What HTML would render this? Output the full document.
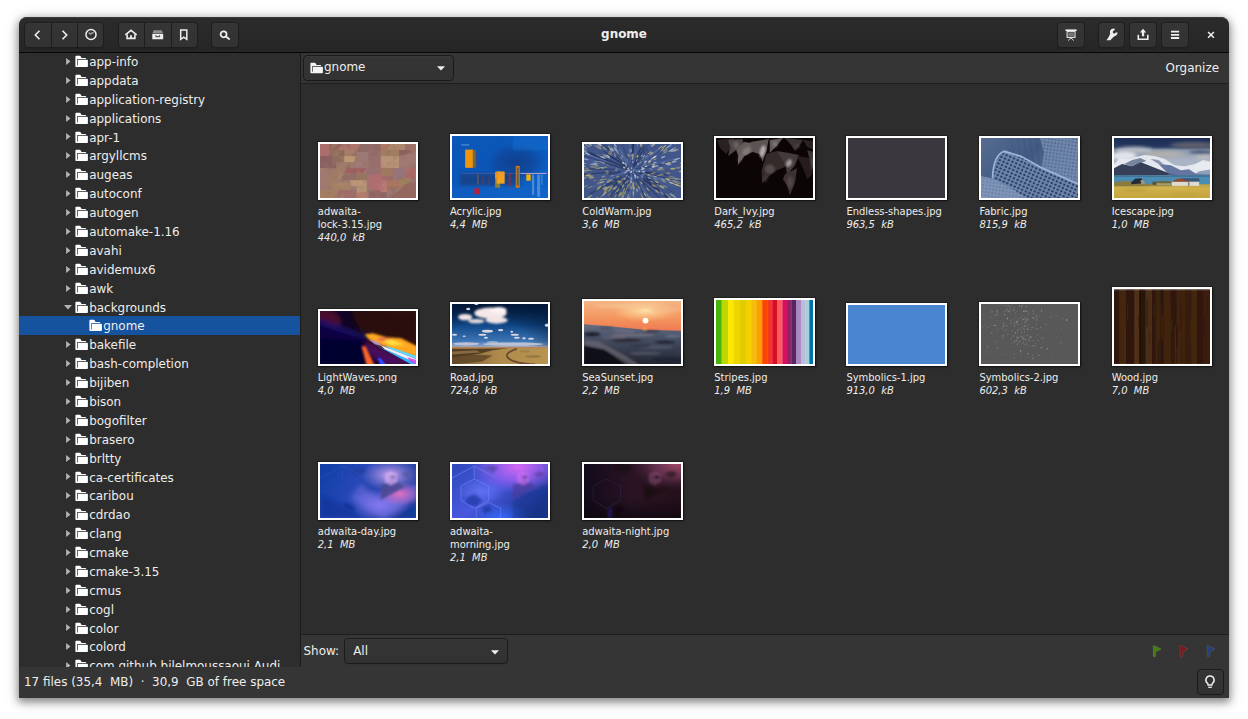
<!DOCTYPE html>
<html><head><meta charset="utf-8"><title>gnome</title>
<style>
html,body{margin:0;padding:0;background:#fff;}
body{width:1248px;height:719px;overflow:hidden;position:relative;font-family:"DejaVu Sans","Liberation Sans",sans-serif;color:#eeeeec;font-size:11.94px;}
#win{position:absolute;left:19px;top:17px;width:1210px;height:681px;background:#353535;border-radius:8px 8px 0 0;box-shadow:0 3px 9px 1px rgba(0,0,0,0.44),0 2px 16px 2px rgba(0,0,0,0.10);overflow:hidden;}
#hdr{position:absolute;left:0;top:0;width:1210px;height:35px;background:linear-gradient(to top,#262626,#2b2b2b);border-bottom:1px solid #070707;box-shadow:inset 0 1px rgba(238,238,236,0.07);border-radius:8px 8px 0 0;}
#title{position:absolute;left:0;width:1210px;top:9px;text-align:center;font-weight:bold;font-size:11.94px;line-height:17px;}
.grp{position:absolute;top:5px;height:24px;border:1px solid #1e1e1e;border-radius:4px;background:linear-gradient(to top,#323232 2px,#353535);box-shadow:inset 0 1px rgba(255,255,255,0.02),0 1px 1px rgba(0,0,0,0.15);}
.grp i{position:absolute;top:0;width:1px;height:24px;background:#1e1e1e;}
.hi{position:absolute;}
.bg{position:absolute;top:6px;height:24px;display:flex;border-radius:4px;}
.btn{width:24px;height:22px;border:1px solid #1b1b1b;border-left-width:0;background:linear-gradient(to top,#323232 2px,#353535);box-shadow:inset 0 1px rgba(255,255,255,0.02);position:relative;}
.btn:first-child{border-left-width:1px;border-radius:4px 0 0 4px;}
.btn:last-child{border-radius:0 4px 4px 0;}
.btn:only-child{border-radius:4px;}
.bg .btn{width:25px}.bg .btn:first-child{width:24px}
.btn svg{position:absolute;left:50%;top:50%;transform:translate(-50%,-50%);}
#side{position:absolute;left:0;top:36px;width:281px;height:614px;background:#2d2d2d;overflow:hidden;}
#vsep{position:absolute;left:281px;top:36px;width:1px;height:614px;background:#1b1b1b;}
.row{position:absolute;left:0;width:281px;height:18.9px;}
.row.sel{background:#15539e;}
.row .ar{position:absolute;}
.row .ic{position:absolute;top:3px;}
.row .fi{display:block;}
.row .tx{position:absolute;top:2px;line-height:17px;white-space:pre;}
#loc{position:absolute;left:282px;top:36px;width:928px;height:30px;background:#353535;border-bottom:1px solid #1e1e1e;}
.combo{position:absolute;border:1px solid #1b1b1b;border-radius:4px;background:linear-gradient(to top,#323232 2px,#353535);box-shadow:inset 0 1px rgba(255,255,255,0.02),0 1px 2px rgba(0,0,0,0.07);}
#grid{position:absolute;left:282px;top:67px;width:928px;height:550px;background:#2d2d2d;}
#filt{position:absolute;left:282px;top:617px;width:928px;height:32px;background:#353535;border-top:1px solid #1e1e1e;}
#stat{position:absolute;left:0;top:650px;width:1210px;height:31px;background:#353535;}
.th{position:absolute;box-sizing:border-box;border:2px solid #fff;box-shadow:0 0 0 1px rgba(0,0,0,0.25),1px 1px 2px rgba(0,0,0,0.5);background:#fff;}
.th{overflow:hidden;}
.th svg{display:block;width:calc(100% + 0.9px);height:calc(100% + 0.9px);}
.cap{position:absolute;font-size:9.95px;line-height:13px;white-space:pre;}
.cap i{font-style:oblique;}
</style></head><body>
<div id="win">
<div id="hdr">
<div id="title">gnome</div>
<div class="grp" style="left:5px;width:78px"><i style="left:26px"></i><i style="left:52.3px"></i></div><div class="grp" style="left:99px;width:78px"><i style="left:25.4px"></i><i style="left:52.3px"></i></div><div class="grp" style="left:192px;width:26px"></div>
<div class="grp" style="left:1038px;width:25.5px"></div><div class="grp" style="left:1078.5px;width:25.5px"></div><div class="grp" style="left:1110px;width:26px"></div><div class="grp" style="left:1142px;width:25.5px"></div>
<svg class="hi" style="left:11px;top:10px" width="16" height="16" viewBox="0 0 16 16"><path d="M9.5 3.8L5.3 8l4.2 4.2" stroke="#eeeeec" fill="none" stroke-width="1.6"/></svg>
<svg class="hi" style="left:37.2px;top:10px" width="16" height="16" viewBox="0 0 16 16"><path d="M6.5 3.8L10.7 8l-4.2 4.2" stroke="#eeeeec" fill="none" stroke-width="1.6"/></svg>
<svg class="hi" style="left:64px;top:10px" width="16" height="16" viewBox="0 0 16 16"><circle cx="8" cy="7.5" r="5.05" stroke="#eeeeec" fill="none" stroke-width="1.5"/><path d="M5.8 5.6L7.6 7.1l3-2" stroke="#a0a09f" fill="none" stroke-width="1.4"/></svg>
<svg class="hi" style="left:103.9px;top:10px" width="16" height="16" viewBox="0 0 16 16"><path d="M2.3 7.9L8 3.3L13.7 7.9" stroke="#eeeeec" fill="none" stroke-width="1.5"/><path d="M4.1 7.2V11.4H11.9V7.2" stroke="#eeeeec" fill="none" stroke-width="1.6"/><rect x="7.1" y="8.2" width="1.8" height="3.4" fill="#eeeeec"/></svg>
<svg class="hi" style="left:131px;top:10px" width="16" height="16" viewBox="0 0 16 16"><path d="M3.6 3.2H11.8L13 6.4H2.4Z" fill="#8f8f8e"/><path d="M2.3 7H13.2V12.2H2.3Z" fill="#eeeeec"/><path d="M5.9 8.2V9.7H9.6V8.2" stroke="#333" fill="none" stroke-width="1"/></svg>
<svg class="hi" style="left:156.8px;top:10px" width="16" height="16" viewBox="0 0 16 16"><path d="M4.7 2.9H10.8V12.3L7.75 10.2L4.7 12.3Z" stroke="#eeeeec" fill="none" stroke-width="1.5"/></svg>
<svg class="hi" style="left:198px;top:10px" width="16" height="16" viewBox="0 0 16 16"><circle cx="6.6" cy="7.3" r="3" stroke="#eeeeec" fill="none" stroke-width="1.7"/><path d="M8.9 9.6L12.7 12.4" stroke="#eeeeec" fill="none" stroke-width="1.9"/></svg>
<svg class="hi" style="left:1043.5px;top:10px" width="16" height="16" viewBox="0 0 16 16"><rect x="2.5" y="2.4" width="11.1" height="1.6" fill="#eeeeec"/><rect x="4.1" y="4.4" width="7.9" height="6" fill="#777" stroke="#eeeeec" stroke-width="1"/><rect x="5.1" y="5.2" width="5.9" height="4.4" fill="none" stroke="#3a3a3a" stroke-width="0.5"/><path d="M5.2 13.5L8 10.9L10.8 13.5" stroke="#eeeeec" fill="none" stroke-width="0.9"/></svg>
<svg class="hi" style="left:1084.5px;top:10px" width="16" height="16" viewBox="0 0 16 16"><path d="M10.61 1.49A3.9 3.9 0 1 0 13.66 5.84L11.77 5.31A1.5 1.5 0 1 1 10.51 3.51Z" fill="#eeeeec"/><path d="M6.3 6.4Q5 10 2.4 13.2H6.3L11 8.6Z" fill="#eeeeec"/></svg>
<svg class="hi" style="left:1116px;top:10px" width="16" height="16" viewBox="0 0 16 16"><path d="M3.3 7.8V12.2H12.8V7.8" stroke="#eeeeec" fill="none" stroke-width="1.6"/><rect x="6.9" y="4.6" width="2.3" height="4.7" fill="#eeeeec"/><path d="M4.9 5.5L8.05 1.8L11.2 5.5Z" fill="#eeeeec"/></svg>
<svg class="hi" style="left:1147.75px;top:10px" width="16" height="16" viewBox="0 0 16 16"><path d="M3.95 4.7H12.15M3.95 7.85H12.15M3.95 11H12.15" stroke="#eeeeec" fill="none" stroke-width="1.8"/></svg>
<svg class="hi" style="left:1184px;top:10px" width="16" height="16" viewBox="0 0 16 16"><path d="M5.1 5L10.9 10.8M10.9 5L5.1 10.8" stroke="#eeeeec" fill="none" stroke-width="1.55"/></svg>
</div>
<div id="side">
<div class="row" style="top:-0.95px"><svg class="ar" style="left:47px;top:5.9px" width="5" height="7" viewBox="0 0 5 7"><path d="M0.1 0V7L4.5 3.5Z" fill="#b4b4b3"/></svg><span class="ic" style="left:56px"><svg class="fi" viewBox="0 0 13 12" width="13" height="12"><path fill-rule="evenodd" d="M0.4 1.6Q0.4 0.8 1.2 0.8H4.9Q5.3 0.8 5.6 1.3L6.6 3.1H10.5Q11.1 3.1 11.1 3.7V4.7H12.2Q12.9 4.7 12.9 5.4V11.3Q12.9 12 12.2 12H1.2Q0.4 12 0.4 11.2ZM2.2 4.1H11.1V4.8H2.9V10.4H2.2Z" fill="#fff"/></svg></span><span class="tx" style="left:70.2px">app-info</span></div>
<div class="row" style="top:17.94px"><svg class="ar" style="left:47px;top:5.9px" width="5" height="7" viewBox="0 0 5 7"><path d="M0.1 0V7L4.5 3.5Z" fill="#b4b4b3"/></svg><span class="ic" style="left:56px"><svg class="fi" viewBox="0 0 13 12" width="13" height="12"><path fill-rule="evenodd" d="M0.4 1.6Q0.4 0.8 1.2 0.8H4.9Q5.3 0.8 5.6 1.3L6.6 3.1H10.5Q11.1 3.1 11.1 3.7V4.7H12.2Q12.9 4.7 12.9 5.4V11.3Q12.9 12 12.2 12H1.2Q0.4 12 0.4 11.2ZM2.2 4.1H11.1V4.8H2.9V10.4H2.2Z" fill="#fff"/></svg></span><span class="tx" style="left:70.2px">appdata</span></div>
<div class="row" style="top:36.82px"><svg class="ar" style="left:47px;top:5.9px" width="5" height="7" viewBox="0 0 5 7"><path d="M0.1 0V7L4.5 3.5Z" fill="#b4b4b3"/></svg><span class="ic" style="left:56px"><svg class="fi" viewBox="0 0 13 12" width="13" height="12"><path fill-rule="evenodd" d="M0.4 1.6Q0.4 0.8 1.2 0.8H4.9Q5.3 0.8 5.6 1.3L6.6 3.1H10.5Q11.1 3.1 11.1 3.7V4.7H12.2Q12.9 4.7 12.9 5.4V11.3Q12.9 12 12.2 12H1.2Q0.4 12 0.4 11.2ZM2.2 4.1H11.1V4.8H2.9V10.4H2.2Z" fill="#fff"/></svg></span><span class="tx" style="left:70.2px">application-registry</span></div>
<div class="row" style="top:55.7px"><svg class="ar" style="left:47px;top:5.9px" width="5" height="7" viewBox="0 0 5 7"><path d="M0.1 0V7L4.5 3.5Z" fill="#b4b4b3"/></svg><span class="ic" style="left:56px"><svg class="fi" viewBox="0 0 13 12" width="13" height="12"><path fill-rule="evenodd" d="M0.4 1.6Q0.4 0.8 1.2 0.8H4.9Q5.3 0.8 5.6 1.3L6.6 3.1H10.5Q11.1 3.1 11.1 3.7V4.7H12.2Q12.9 4.7 12.9 5.4V11.3Q12.9 12 12.2 12H1.2Q0.4 12 0.4 11.2ZM2.2 4.1H11.1V4.8H2.9V10.4H2.2Z" fill="#fff"/></svg></span><span class="tx" style="left:70.2px">applications</span></div>
<div class="row" style="top:74.59px"><svg class="ar" style="left:47px;top:5.9px" width="5" height="7" viewBox="0 0 5 7"><path d="M0.1 0V7L4.5 3.5Z" fill="#b4b4b3"/></svg><span class="ic" style="left:56px"><svg class="fi" viewBox="0 0 13 12" width="13" height="12"><path fill-rule="evenodd" d="M0.4 1.6Q0.4 0.8 1.2 0.8H4.9Q5.3 0.8 5.6 1.3L6.6 3.1H10.5Q11.1 3.1 11.1 3.7V4.7H12.2Q12.9 4.7 12.9 5.4V11.3Q12.9 12 12.2 12H1.2Q0.4 12 0.4 11.2ZM2.2 4.1H11.1V4.8H2.9V10.4H2.2Z" fill="#fff"/></svg></span><span class="tx" style="left:70.2px">apr-1</span></div>
<div class="row" style="top:93.48px"><svg class="ar" style="left:47px;top:5.9px" width="5" height="7" viewBox="0 0 5 7"><path d="M0.1 0V7L4.5 3.5Z" fill="#b4b4b3"/></svg><span class="ic" style="left:56px"><svg class="fi" viewBox="0 0 13 12" width="13" height="12"><path fill-rule="evenodd" d="M0.4 1.6Q0.4 0.8 1.2 0.8H4.9Q5.3 0.8 5.6 1.3L6.6 3.1H10.5Q11.1 3.1 11.1 3.7V4.7H12.2Q12.9 4.7 12.9 5.4V11.3Q12.9 12 12.2 12H1.2Q0.4 12 0.4 11.2ZM2.2 4.1H11.1V4.8H2.9V10.4H2.2Z" fill="#fff"/></svg></span><span class="tx" style="left:70.2px">argyllcms</span></div>
<div class="row" style="top:112.36px"><svg class="ar" style="left:47px;top:5.9px" width="5" height="7" viewBox="0 0 5 7"><path d="M0.1 0V7L4.5 3.5Z" fill="#b4b4b3"/></svg><span class="ic" style="left:56px"><svg class="fi" viewBox="0 0 13 12" width="13" height="12"><path fill-rule="evenodd" d="M0.4 1.6Q0.4 0.8 1.2 0.8H4.9Q5.3 0.8 5.6 1.3L6.6 3.1H10.5Q11.1 3.1 11.1 3.7V4.7H12.2Q12.9 4.7 12.9 5.4V11.3Q12.9 12 12.2 12H1.2Q0.4 12 0.4 11.2ZM2.2 4.1H11.1V4.8H2.9V10.4H2.2Z" fill="#fff"/></svg></span><span class="tx" style="left:70.2px">augeas</span></div>
<div class="row" style="top:131.25px"><svg class="ar" style="left:47px;top:5.9px" width="5" height="7" viewBox="0 0 5 7"><path d="M0.1 0V7L4.5 3.5Z" fill="#b4b4b3"/></svg><span class="ic" style="left:56px"><svg class="fi" viewBox="0 0 13 12" width="13" height="12"><path fill-rule="evenodd" d="M0.4 1.6Q0.4 0.8 1.2 0.8H4.9Q5.3 0.8 5.6 1.3L6.6 3.1H10.5Q11.1 3.1 11.1 3.7V4.7H12.2Q12.9 4.7 12.9 5.4V11.3Q12.9 12 12.2 12H1.2Q0.4 12 0.4 11.2ZM2.2 4.1H11.1V4.8H2.9V10.4H2.2Z" fill="#fff"/></svg></span><span class="tx" style="left:70.2px">autoconf</span></div>
<div class="row" style="top:150.13px"><svg class="ar" style="left:47px;top:5.9px" width="5" height="7" viewBox="0 0 5 7"><path d="M0.1 0V7L4.5 3.5Z" fill="#b4b4b3"/></svg><span class="ic" style="left:56px"><svg class="fi" viewBox="0 0 13 12" width="13" height="12"><path fill-rule="evenodd" d="M0.4 1.6Q0.4 0.8 1.2 0.8H4.9Q5.3 0.8 5.6 1.3L6.6 3.1H10.5Q11.1 3.1 11.1 3.7V4.7H12.2Q12.9 4.7 12.9 5.4V11.3Q12.9 12 12.2 12H1.2Q0.4 12 0.4 11.2ZM2.2 4.1H11.1V4.8H2.9V10.4H2.2Z" fill="#fff"/></svg></span><span class="tx" style="left:70.2px">autogen</span></div>
<div class="row" style="top:169.01px"><svg class="ar" style="left:47px;top:5.9px" width="5" height="7" viewBox="0 0 5 7"><path d="M0.1 0V7L4.5 3.5Z" fill="#b4b4b3"/></svg><span class="ic" style="left:56px"><svg class="fi" viewBox="0 0 13 12" width="13" height="12"><path fill-rule="evenodd" d="M0.4 1.6Q0.4 0.8 1.2 0.8H4.9Q5.3 0.8 5.6 1.3L6.6 3.1H10.5Q11.1 3.1 11.1 3.7V4.7H12.2Q12.9 4.7 12.9 5.4V11.3Q12.9 12 12.2 12H1.2Q0.4 12 0.4 11.2ZM2.2 4.1H11.1V4.8H2.9V10.4H2.2Z" fill="#fff"/></svg></span><span class="tx" style="left:70.2px">automake-1.16</span></div>
<div class="row" style="top:187.9px"><svg class="ar" style="left:47px;top:5.9px" width="5" height="7" viewBox="0 0 5 7"><path d="M0.1 0V7L4.5 3.5Z" fill="#b4b4b3"/></svg><span class="ic" style="left:56px"><svg class="fi" viewBox="0 0 13 12" width="13" height="12"><path fill-rule="evenodd" d="M0.4 1.6Q0.4 0.8 1.2 0.8H4.9Q5.3 0.8 5.6 1.3L6.6 3.1H10.5Q11.1 3.1 11.1 3.7V4.7H12.2Q12.9 4.7 12.9 5.4V11.3Q12.9 12 12.2 12H1.2Q0.4 12 0.4 11.2ZM2.2 4.1H11.1V4.8H2.9V10.4H2.2Z" fill="#fff"/></svg></span><span class="tx" style="left:70.2px">avahi</span></div>
<div class="row" style="top:206.79px"><svg class="ar" style="left:47px;top:5.9px" width="5" height="7" viewBox="0 0 5 7"><path d="M0.1 0V7L4.5 3.5Z" fill="#b4b4b3"/></svg><span class="ic" style="left:56px"><svg class="fi" viewBox="0 0 13 12" width="13" height="12"><path fill-rule="evenodd" d="M0.4 1.6Q0.4 0.8 1.2 0.8H4.9Q5.3 0.8 5.6 1.3L6.6 3.1H10.5Q11.1 3.1 11.1 3.7V4.7H12.2Q12.9 4.7 12.9 5.4V11.3Q12.9 12 12.2 12H1.2Q0.4 12 0.4 11.2ZM2.2 4.1H11.1V4.8H2.9V10.4H2.2Z" fill="#fff"/></svg></span><span class="tx" style="left:70.2px">avidemux6</span></div>
<div class="row" style="top:225.67px"><svg class="ar" style="left:47px;top:5.9px" width="5" height="7" viewBox="0 0 5 7"><path d="M0.1 0V7L4.5 3.5Z" fill="#b4b4b3"/></svg><span class="ic" style="left:56px"><svg class="fi" viewBox="0 0 13 12" width="13" height="12"><path fill-rule="evenodd" d="M0.4 1.6Q0.4 0.8 1.2 0.8H4.9Q5.3 0.8 5.6 1.3L6.6 3.1H10.5Q11.1 3.1 11.1 3.7V4.7H12.2Q12.9 4.7 12.9 5.4V11.3Q12.9 12 12.2 12H1.2Q0.4 12 0.4 11.2ZM2.2 4.1H11.1V4.8H2.9V10.4H2.2Z" fill="#fff"/></svg></span><span class="tx" style="left:70.2px">awk</span></div>
<div class="row" style="top:244.56px"><svg class="ar" style="left:45px;top:7.8px" width="8" height="5" viewBox="0 0 8 5"><path d="M0 0H8L4 4.4Z" fill="#b4b4b3"/></svg><span class="ic" style="left:56px"><svg class="fi" viewBox="0 0 13 12" width="13" height="12"><path fill-rule="evenodd" d="M0.4 1.6Q0.4 0.8 1.2 0.8H4.9Q5.3 0.8 5.6 1.3L6.6 3.1H10.5Q11.1 3.1 11.1 3.7V4.7H12.2Q12.9 4.7 12.9 5.4V11.3Q12.9 12 12.2 12H1.2Q0.4 12 0.4 11.2ZM2.2 4.1H11.1V4.8H2.9V10.4H2.2Z" fill="#fff"/></svg></span><span class="tx" style="left:70.2px">backgrounds</span></div>
<div class="row sel" style="top:263.44px"><span class="ic" style="left:70px"><svg class="fi" viewBox="0 0 13 12" width="13" height="12"><path fill-rule="evenodd" d="M0.4 1.6Q0.4 0.8 1.2 0.8H4.9Q5.3 0.8 5.6 1.3L6.6 3.1H10.5Q11.1 3.1 11.1 3.7V4.7H12.2Q12.9 4.7 12.9 5.4V11.3Q12.9 12 12.2 12H1.2Q0.4 12 0.4 11.2ZM2.2 4.1H11.1V4.8H2.9V10.4H2.2Z" fill="#fff"/></svg></span><span class="tx" style="left:84.2px">gnome</span></div>
<div class="row" style="top:282.33px"><svg class="ar" style="left:47px;top:5.9px" width="5" height="7" viewBox="0 0 5 7"><path d="M0.1 0V7L4.5 3.5Z" fill="#b4b4b3"/></svg><span class="ic" style="left:56px"><svg class="fi" viewBox="0 0 13 12" width="13" height="12"><path fill-rule="evenodd" d="M0.4 1.6Q0.4 0.8 1.2 0.8H4.9Q5.3 0.8 5.6 1.3L6.6 3.1H10.5Q11.1 3.1 11.1 3.7V4.7H12.2Q12.9 4.7 12.9 5.4V11.3Q12.9 12 12.2 12H1.2Q0.4 12 0.4 11.2ZM2.2 4.1H11.1V4.8H2.9V10.4H2.2Z" fill="#fff"/></svg></span><span class="tx" style="left:70.2px">bakefile</span></div>
<div class="row" style="top:301.21px"><svg class="ar" style="left:47px;top:5.9px" width="5" height="7" viewBox="0 0 5 7"><path d="M0.1 0V7L4.5 3.5Z" fill="#b4b4b3"/></svg><span class="ic" style="left:56px"><svg class="fi" viewBox="0 0 13 12" width="13" height="12"><path fill-rule="evenodd" d="M0.4 1.6Q0.4 0.8 1.2 0.8H4.9Q5.3 0.8 5.6 1.3L6.6 3.1H10.5Q11.1 3.1 11.1 3.7V4.7H12.2Q12.9 4.7 12.9 5.4V11.3Q12.9 12 12.2 12H1.2Q0.4 12 0.4 11.2ZM2.2 4.1H11.1V4.8H2.9V10.4H2.2Z" fill="#fff"/></svg></span><span class="tx" style="left:70.2px">bash-completion</span></div>
<div class="row" style="top:320.1px"><svg class="ar" style="left:47px;top:5.9px" width="5" height="7" viewBox="0 0 5 7"><path d="M0.1 0V7L4.5 3.5Z" fill="#b4b4b3"/></svg><span class="ic" style="left:56px"><svg class="fi" viewBox="0 0 13 12" width="13" height="12"><path fill-rule="evenodd" d="M0.4 1.6Q0.4 0.8 1.2 0.8H4.9Q5.3 0.8 5.6 1.3L6.6 3.1H10.5Q11.1 3.1 11.1 3.7V4.7H12.2Q12.9 4.7 12.9 5.4V11.3Q12.9 12 12.2 12H1.2Q0.4 12 0.4 11.2ZM2.2 4.1H11.1V4.8H2.9V10.4H2.2Z" fill="#fff"/></svg></span><span class="tx" style="left:70.2px">bijiben</span></div>
<div class="row" style="top:338.98px"><svg class="ar" style="left:47px;top:5.9px" width="5" height="7" viewBox="0 0 5 7"><path d="M0.1 0V7L4.5 3.5Z" fill="#b4b4b3"/></svg><span class="ic" style="left:56px"><svg class="fi" viewBox="0 0 13 12" width="13" height="12"><path fill-rule="evenodd" d="M0.4 1.6Q0.4 0.8 1.2 0.8H4.9Q5.3 0.8 5.6 1.3L6.6 3.1H10.5Q11.1 3.1 11.1 3.7V4.7H12.2Q12.9 4.7 12.9 5.4V11.3Q12.9 12 12.2 12H1.2Q0.4 12 0.4 11.2ZM2.2 4.1H11.1V4.8H2.9V10.4H2.2Z" fill="#fff"/></svg></span><span class="tx" style="left:70.2px">bison</span></div>
<div class="row" style="top:357.87px"><svg class="ar" style="left:47px;top:5.9px" width="5" height="7" viewBox="0 0 5 7"><path d="M0.1 0V7L4.5 3.5Z" fill="#b4b4b3"/></svg><span class="ic" style="left:56px"><svg class="fi" viewBox="0 0 13 12" width="13" height="12"><path fill-rule="evenodd" d="M0.4 1.6Q0.4 0.8 1.2 0.8H4.9Q5.3 0.8 5.6 1.3L6.6 3.1H10.5Q11.1 3.1 11.1 3.7V4.7H12.2Q12.9 4.7 12.9 5.4V11.3Q12.9 12 12.2 12H1.2Q0.4 12 0.4 11.2ZM2.2 4.1H11.1V4.8H2.9V10.4H2.2Z" fill="#fff"/></svg></span><span class="tx" style="left:70.2px">bogofilter</span></div>
<div class="row" style="top:376.75px"><svg class="ar" style="left:47px;top:5.9px" width="5" height="7" viewBox="0 0 5 7"><path d="M0.1 0V7L4.5 3.5Z" fill="#b4b4b3"/></svg><span class="ic" style="left:56px"><svg class="fi" viewBox="0 0 13 12" width="13" height="12"><path fill-rule="evenodd" d="M0.4 1.6Q0.4 0.8 1.2 0.8H4.9Q5.3 0.8 5.6 1.3L6.6 3.1H10.5Q11.1 3.1 11.1 3.7V4.7H12.2Q12.9 4.7 12.9 5.4V11.3Q12.9 12 12.2 12H1.2Q0.4 12 0.4 11.2ZM2.2 4.1H11.1V4.8H2.9V10.4H2.2Z" fill="#fff"/></svg></span><span class="tx" style="left:70.2px">brasero</span></div>
<div class="row" style="top:395.64px"><svg class="ar" style="left:47px;top:5.9px" width="5" height="7" viewBox="0 0 5 7"><path d="M0.1 0V7L4.5 3.5Z" fill="#b4b4b3"/></svg><span class="ic" style="left:56px"><svg class="fi" viewBox="0 0 13 12" width="13" height="12"><path fill-rule="evenodd" d="M0.4 1.6Q0.4 0.8 1.2 0.8H4.9Q5.3 0.8 5.6 1.3L6.6 3.1H10.5Q11.1 3.1 11.1 3.7V4.7H12.2Q12.9 4.7 12.9 5.4V11.3Q12.9 12 12.2 12H1.2Q0.4 12 0.4 11.2ZM2.2 4.1H11.1V4.8H2.9V10.4H2.2Z" fill="#fff"/></svg></span><span class="tx" style="left:70.2px">brltty</span></div>
<div class="row" style="top:414.52px"><svg class="ar" style="left:47px;top:5.9px" width="5" height="7" viewBox="0 0 5 7"><path d="M0.1 0V7L4.5 3.5Z" fill="#b4b4b3"/></svg><span class="ic" style="left:56px"><svg class="fi" viewBox="0 0 13 12" width="13" height="12"><path fill-rule="evenodd" d="M0.4 1.6Q0.4 0.8 1.2 0.8H4.9Q5.3 0.8 5.6 1.3L6.6 3.1H10.5Q11.1 3.1 11.1 3.7V4.7H12.2Q12.9 4.7 12.9 5.4V11.3Q12.9 12 12.2 12H1.2Q0.4 12 0.4 11.2ZM2.2 4.1H11.1V4.8H2.9V10.4H2.2Z" fill="#fff"/></svg></span><span class="tx" style="left:70.2px">ca-certificates</span></div>
<div class="row" style="top:433.41px"><svg class="ar" style="left:47px;top:5.9px" width="5" height="7" viewBox="0 0 5 7"><path d="M0.1 0V7L4.5 3.5Z" fill="#b4b4b3"/></svg><span class="ic" style="left:56px"><svg class="fi" viewBox="0 0 13 12" width="13" height="12"><path fill-rule="evenodd" d="M0.4 1.6Q0.4 0.8 1.2 0.8H4.9Q5.3 0.8 5.6 1.3L6.6 3.1H10.5Q11.1 3.1 11.1 3.7V4.7H12.2Q12.9 4.7 12.9 5.4V11.3Q12.9 12 12.2 12H1.2Q0.4 12 0.4 11.2ZM2.2 4.1H11.1V4.8H2.9V10.4H2.2Z" fill="#fff"/></svg></span><span class="tx" style="left:70.2px">caribou</span></div>
<div class="row" style="top:452.29px"><svg class="ar" style="left:47px;top:5.9px" width="5" height="7" viewBox="0 0 5 7"><path d="M0.1 0V7L4.5 3.5Z" fill="#b4b4b3"/></svg><span class="ic" style="left:56px"><svg class="fi" viewBox="0 0 13 12" width="13" height="12"><path fill-rule="evenodd" d="M0.4 1.6Q0.4 0.8 1.2 0.8H4.9Q5.3 0.8 5.6 1.3L6.6 3.1H10.5Q11.1 3.1 11.1 3.7V4.7H12.2Q12.9 4.7 12.9 5.4V11.3Q12.9 12 12.2 12H1.2Q0.4 12 0.4 11.2ZM2.2 4.1H11.1V4.8H2.9V10.4H2.2Z" fill="#fff"/></svg></span><span class="tx" style="left:70.2px">cdrdao</span></div>
<div class="row" style="top:471.18px"><svg class="ar" style="left:47px;top:5.9px" width="5" height="7" viewBox="0 0 5 7"><path d="M0.1 0V7L4.5 3.5Z" fill="#b4b4b3"/></svg><span class="ic" style="left:56px"><svg class="fi" viewBox="0 0 13 12" width="13" height="12"><path fill-rule="evenodd" d="M0.4 1.6Q0.4 0.8 1.2 0.8H4.9Q5.3 0.8 5.6 1.3L6.6 3.1H10.5Q11.1 3.1 11.1 3.7V4.7H12.2Q12.9 4.7 12.9 5.4V11.3Q12.9 12 12.2 12H1.2Q0.4 12 0.4 11.2ZM2.2 4.1H11.1V4.8H2.9V10.4H2.2Z" fill="#fff"/></svg></span><span class="tx" style="left:70.2px">clang</span></div>
<div class="row" style="top:490.06px"><svg class="ar" style="left:47px;top:5.9px" width="5" height="7" viewBox="0 0 5 7"><path d="M0.1 0V7L4.5 3.5Z" fill="#b4b4b3"/></svg><span class="ic" style="left:56px"><svg class="fi" viewBox="0 0 13 12" width="13" height="12"><path fill-rule="evenodd" d="M0.4 1.6Q0.4 0.8 1.2 0.8H4.9Q5.3 0.8 5.6 1.3L6.6 3.1H10.5Q11.1 3.1 11.1 3.7V4.7H12.2Q12.9 4.7 12.9 5.4V11.3Q12.9 12 12.2 12H1.2Q0.4 12 0.4 11.2ZM2.2 4.1H11.1V4.8H2.9V10.4H2.2Z" fill="#fff"/></svg></span><span class="tx" style="left:70.2px">cmake</span></div>
<div class="row" style="top:508.95px"><svg class="ar" style="left:47px;top:5.9px" width="5" height="7" viewBox="0 0 5 7"><path d="M0.1 0V7L4.5 3.5Z" fill="#b4b4b3"/></svg><span class="ic" style="left:56px"><svg class="fi" viewBox="0 0 13 12" width="13" height="12"><path fill-rule="evenodd" d="M0.4 1.6Q0.4 0.8 1.2 0.8H4.9Q5.3 0.8 5.6 1.3L6.6 3.1H10.5Q11.1 3.1 11.1 3.7V4.7H12.2Q12.9 4.7 12.9 5.4V11.3Q12.9 12 12.2 12H1.2Q0.4 12 0.4 11.2ZM2.2 4.1H11.1V4.8H2.9V10.4H2.2Z" fill="#fff"/></svg></span><span class="tx" style="left:70.2px">cmake-3.15</span></div>
<div class="row" style="top:527.83px"><svg class="ar" style="left:47px;top:5.9px" width="5" height="7" viewBox="0 0 5 7"><path d="M0.1 0V7L4.5 3.5Z" fill="#b4b4b3"/></svg><span class="ic" style="left:56px"><svg class="fi" viewBox="0 0 13 12" width="13" height="12"><path fill-rule="evenodd" d="M0.4 1.6Q0.4 0.8 1.2 0.8H4.9Q5.3 0.8 5.6 1.3L6.6 3.1H10.5Q11.1 3.1 11.1 3.7V4.7H12.2Q12.9 4.7 12.9 5.4V11.3Q12.9 12 12.2 12H1.2Q0.4 12 0.4 11.2ZM2.2 4.1H11.1V4.8H2.9V10.4H2.2Z" fill="#fff"/></svg></span><span class="tx" style="left:70.2px">cmus</span></div>
<div class="row" style="top:546.72px"><svg class="ar" style="left:47px;top:5.9px" width="5" height="7" viewBox="0 0 5 7"><path d="M0.1 0V7L4.5 3.5Z" fill="#b4b4b3"/></svg><span class="ic" style="left:56px"><svg class="fi" viewBox="0 0 13 12" width="13" height="12"><path fill-rule="evenodd" d="M0.4 1.6Q0.4 0.8 1.2 0.8H4.9Q5.3 0.8 5.6 1.3L6.6 3.1H10.5Q11.1 3.1 11.1 3.7V4.7H12.2Q12.9 4.7 12.9 5.4V11.3Q12.9 12 12.2 12H1.2Q0.4 12 0.4 11.2ZM2.2 4.1H11.1V4.8H2.9V10.4H2.2Z" fill="#fff"/></svg></span><span class="tx" style="left:70.2px">cogl</span></div>
<div class="row" style="top:565.6px"><svg class="ar" style="left:47px;top:5.9px" width="5" height="7" viewBox="0 0 5 7"><path d="M0.1 0V7L4.5 3.5Z" fill="#b4b4b3"/></svg><span class="ic" style="left:56px"><svg class="fi" viewBox="0 0 13 12" width="13" height="12"><path fill-rule="evenodd" d="M0.4 1.6Q0.4 0.8 1.2 0.8H4.9Q5.3 0.8 5.6 1.3L6.6 3.1H10.5Q11.1 3.1 11.1 3.7V4.7H12.2Q12.9 4.7 12.9 5.4V11.3Q12.9 12 12.2 12H1.2Q0.4 12 0.4 11.2ZM2.2 4.1H11.1V4.8H2.9V10.4H2.2Z" fill="#fff"/></svg></span><span class="tx" style="left:70.2px">color</span></div>
<div class="row" style="top:584.49px"><svg class="ar" style="left:47px;top:5.9px" width="5" height="7" viewBox="0 0 5 7"><path d="M0.1 0V7L4.5 3.5Z" fill="#b4b4b3"/></svg><span class="ic" style="left:56px"><svg class="fi" viewBox="0 0 13 12" width="13" height="12"><path fill-rule="evenodd" d="M0.4 1.6Q0.4 0.8 1.2 0.8H4.9Q5.3 0.8 5.6 1.3L6.6 3.1H10.5Q11.1 3.1 11.1 3.7V4.7H12.2Q12.9 4.7 12.9 5.4V11.3Q12.9 12 12.2 12H1.2Q0.4 12 0.4 11.2ZM2.2 4.1H11.1V4.8H2.9V10.4H2.2Z" fill="#fff"/></svg></span><span class="tx" style="left:70.2px">colord</span></div>
<div class="row" style="top:603.37px"><svg class="ar" style="left:47px;top:5.9px" width="5" height="7" viewBox="0 0 5 7"><path d="M0.1 0V7L4.5 3.5Z" fill="#b4b4b3"/></svg><span class="ic" style="left:56px"><svg class="fi" viewBox="0 0 13 12" width="13" height="12"><path fill-rule="evenodd" d="M0.4 1.6Q0.4 0.8 1.2 0.8H4.9Q5.3 0.8 5.6 1.3L6.6 3.1H10.5Q11.1 3.1 11.1 3.7V4.7H12.2Q12.9 4.7 12.9 5.4V11.3Q12.9 12 12.2 12H1.2Q0.4 12 0.4 11.2ZM2.2 4.1H11.1V4.8H2.9V10.4H2.2Z" fill="#fff"/></svg></span><span class="tx" style="left:70.2px">com.github.bilelmoussaoui.Audi</span></div>
</div>
<div id="vsep"></div>
<div id="loc"><div class="combo" style="left:2px;top:2px;width:149px;height:24px"><svg viewBox="0 0 13 12" width="13" height="12" style="position:absolute;left:5.8px;top:6px"><path fill-rule="evenodd" d="M0.4 1.6Q0.4 0.8 1.2 0.8H4.9Q5.3 0.8 5.6 1.3L6.6 3.1H10.5Q11.1 3.1 11.1 3.7V4.7H12.2Q12.9 4.7 12.9 5.4V10.6Q12.9 11.3 12.2 11.3H1.2Q0.4 11.3 0.4 10.5ZM2.2 4.1H11.1V4.8H2.9V9.8H2.2Z" fill="#f4f4f2"/></svg><span style="position:absolute;left:20px;top:3px;line-height:17px">gnome</span><svg viewBox="0 0 8 5" width="8" height="5" style="position:absolute;left:132.5px;top:10.4px"><path d="M0 0.2H8L4 4.4Z" fill="#eeeeec"/></svg></div><div style="position:absolute;right:10px;top:7px;line-height:17px">Organize</div></div>
<div id="grid"></div>
<div class="th" style="left:298.8px;top:125.3px;width:100.4px;height:57.5px"><svg width="96" height="54" viewBox="0 0 96 54" preserveAspectRatio="none"><defs><filter id="lkb" x="0" y="0" width="100%" height="100%"><feGaussianBlur stdDeviation="0.7"/></filter></defs><g filter="url(#lkb)"><rect x="0" y="0" width="96" height="54" fill="#9c7a72"/><polygon points="0,0 9,0 9,12 0,12" fill="#b46c70"/><polygon points="9,0 22,0 12,12 9,12" fill="#8e6258"/><polygon points="22,0 40,0 36,6 18,6" fill="#b87870"/><polygon points="40,0 60,0 60,8 36,8" fill="#8c6866"/><polygon points="60,0 70,0 66,6 60,6" fill="#b07860"/><polygon points="70,0 84,0 84,6 66,6" fill="#b49070"/><polygon points="84,0 96,0 96,10 84,10" fill="#a07068"/><polygon points="0,12 16,12 16,24 0,24" fill="#865c60"/><polygon points="12,6 24,6 24,18 12,18" fill="#8e6e58"/><polygon points="24,6 36,6 36,12 24,12" fill="#a88468"/><polygon points="24,12 36,12 36,18 24,18" fill="#cba878"/><polygon points="36,8 48,8 48,24 32,24" fill="#9c7c78"/><polygon points="48,6 60,6 60,24 48,24" fill="#966e6c"/><polygon points="60,6 78,6 78,12 60,12" fill="#a4845c"/><polygon points="60,12 78,12 78,24 60,24" fill="#c4a07c"/><polygon points="78,6 90,6 90,14 78,14" fill="#885e58"/><polygon points="78,12 96,8 96,18 78,24" fill="#a47c78"/><polygon points="0,24 8,24 8,46 0,46" fill="#a47c74"/><polygon points="5,46 5,34 22,18 36,18 22,30 22,34" fill="#a08068"/><polygon points="26,24 46,24 42,29 24,29" fill="#a05c5a"/><polygon points="46,24 60,24 60,32 46,32" fill="#927274"/><polygon points="60,24 72,24 72,32 60,32" fill="#a07c5c"/><polygon points="72,24 84,24 84,36 72,36" fill="#947880"/><polygon points="84,24 96,24 96,34 84,34" fill="#b46468"/><polygon points="22,30 36,30 36,36 22,36" fill="#8c6c64"/><polygon points="36,30 46,30 46,36 36,36" fill="#94785c"/><polygon points="30,36 46,36 46,42 30,42" fill="#caa880"/><polygon points="12,38 30,38 30,46 12,46" fill="#a88864"/><polygon points="36,42 46,42 46,50 36,50" fill="#c0a078"/><polygon points="48,30 60,30 68,42 60,48 48,44" fill="#b86c72"/><polygon points="60,32 72,32 72,44 66,44" fill="#a46868"/><polygon points="66,36 78,36 78,44 66,44" fill="#b0785c"/><polygon points="78,34 90,34 84,42 78,42" fill="#a08858"/><polygon points="0,46 18,46 18,54 0,54" fill="#a88460"/><polygon points="18,46 36,46 36,54 18,54" fill="#a06c68"/><polygon points="36,48 48,48 48,54 36,54" fill="#c08070"/><polygon points="48,46 66,46 66,54 48,54" fill="#8e6668"/><polygon points="70,54 84,40 96,36 96,54" fill="#94645c"/><polygon points="54,36 66,36 66,48 60,48" fill="#c07478"/><polygon points="0,0 6,0 6,6" fill="#8c7468" opacity="0.21"/><polygon points="0,12 6,12 6,18" fill="#70504c" opacity="0.23"/><polygon points="0,18 6,18 6,24" fill="#b87074" opacity="0.15"/><polygon points="0,24 6,24 0,30" fill="#a88c70" opacity="0.3"/><polygon points="0,48 6,48 0,54" fill="#a88c70" opacity="0.13"/><polygon points="12,0 12,6 6,6" fill="#a88c70" opacity="0.13"/><polygon points="6,6 12,6 12,12" fill="#a88c70" opacity="0.27"/><polygon points="6,12 12,18 6,18" fill="#8c7468" opacity="0.12"/><polygon points="6,18 12,24 6,24" fill="#8c7468" opacity="0.3"/><polygon points="12,42 12,48 6,48" fill="#a88c70" opacity="0.17"/><polygon points="6,48 12,48 6,54" fill="#8c7468" opacity="0.14"/><polygon points="12,0 18,0 12,6" fill="#c8a47c" opacity="0.27"/><polygon points="18,6 18,12 12,12" fill="#c8a47c" opacity="0.2"/><polygon points="12,18 18,18 12,24" fill="#a88c70" opacity="0.23"/><polygon points="12,30 18,30 12,36" fill="#b87074" opacity="0.18"/><polygon points="18,48 18,54 12,54" fill="#70504c" opacity="0.14"/><polygon points="18,0 24,0 24,6" fill="#7c5450" opacity="0.24"/><polygon points="24,6 24,12 18,12" fill="#70504c" opacity="0.26"/><polygon points="18,12 24,12 24,18" fill="#c8a47c" opacity="0.19"/><polygon points="18,24 24,30 18,30" fill="#c8a47c" opacity="0.16"/><polygon points="18,30 24,30 18,36" fill="#c8a47c" opacity="0.3"/><polygon points="18,36 24,42 18,42" fill="#c8a47c" opacity="0.26"/><polygon points="18,42 24,48 18,48" fill="#8c7468" opacity="0.13"/><polygon points="24,48 24,54 18,54" fill="#c8a47c" opacity="0.23"/><polygon points="24,0 30,0 30,6" fill="#7c5450" opacity="0.29"/><polygon points="30,6 30,12 24,12" fill="#8c7468" opacity="0.15"/><polygon points="30,12 30,18 24,18" fill="#a88c70" opacity="0.16"/><polygon points="30,18 30,24 24,24" fill="#70504c" opacity="0.29"/><polygon points="24,36 30,36 24,42" fill="#c8a47c" opacity="0.13"/><polygon points="24,48 30,48 30,54" fill="#b87074" opacity="0.2"/><polygon points="36,6 36,12 30,12" fill="#70504c" opacity="0.3"/><polygon points="30,12 36,12 36,18" fill="#a88c70" opacity="0.24"/><polygon points="36,24 36,30 30,30" fill="#7c5450" opacity="0.25"/><polygon points="30,30 36,30 36,36" fill="#8c7468" opacity="0.16"/><polygon points="30,36 36,42 30,42" fill="#b87074" opacity="0.22"/><polygon points="36,48 36,54 30,54" fill="#8c7468" opacity="0.3"/><polygon points="36,18 42,18 36,24" fill="#c8a47c" opacity="0.21"/><polygon points="36,24 42,30 36,30" fill="#c8a47c" opacity="0.12"/><polygon points="36,36 42,42 36,42" fill="#b87074" opacity="0.14"/><polygon points="36,42 42,42 42,48" fill="#a88c70" opacity="0.19"/><polygon points="42,48 42,54 36,54" fill="#b87074" opacity="0.18"/><polygon points="42,18 48,18 42,24" fill="#8c7468" opacity="0.22"/><polygon points="42,30 48,30 42,36" fill="#a88c70" opacity="0.13"/><polygon points="42,36 48,36 42,42" fill="#b87074" opacity="0.28"/><polygon points="42,48 48,48 48,54" fill="#8c7468" opacity="0.2"/><polygon points="48,0 54,0 48,6" fill="#b87074" opacity="0.23"/><polygon points="54,6 54,12 48,12" fill="#70504c" opacity="0.14"/><polygon points="48,24 54,24 48,30" fill="#b87074" opacity="0.17"/><polygon points="54,36 54,42 48,42" fill="#b87074" opacity="0.24"/><polygon points="54,42 54,48 48,48" fill="#b87074" opacity="0.19"/><polygon points="48,48 54,48 54,54" fill="#7c5450" opacity="0.28"/><polygon points="54,0 60,6 54,6" fill="#7c5450" opacity="0.14"/><polygon points="54,6 60,6 54,12" fill="#70504c" opacity="0.13"/><polygon points="54,24 60,24 60,30" fill="#b87074" opacity="0.29"/><polygon points="54,36 60,36 60,42" fill="#70504c" opacity="0.18"/><polygon points="60,0 66,0 60,6" fill="#c8a47c" opacity="0.17"/><polygon points="60,18 66,24 60,24" fill="#b87074" opacity="0.24"/><polygon points="66,36 66,42 60,42" fill="#c8a47c" opacity="0.26"/><polygon points="66,42 66,48 60,48" fill="#c8a47c" opacity="0.3"/><polygon points="60,48 66,48 60,54" fill="#70504c" opacity="0.22"/><polygon points="66,6 72,6 66,12" fill="#70504c" opacity="0.16"/><polygon points="66,18 72,18 66,24" fill="#8c7468" opacity="0.22"/><polygon points="72,24 72,30 66,30" fill="#b87074" opacity="0.26"/><polygon points="72,30 72,36 66,36" fill="#8c7468" opacity="0.27"/><polygon points="66,42 72,42 72,48" fill="#70504c" opacity="0.19"/><polygon points="72,48 72,54 66,54" fill="#70504c" opacity="0.28"/><polygon points="72,0 78,6 72,6" fill="#8c7468" opacity="0.18"/><polygon points="72,12 78,12 72,18" fill="#7c5450" opacity="0.16"/><polygon points="72,18 78,18 72,24" fill="#b87074" opacity="0.22"/><polygon points="72,30 78,30 72,36" fill="#b87074" opacity="0.21"/><polygon points="72,36 78,42 72,42" fill="#a88c70" opacity="0.2"/><polygon points="72,42 78,42 72,48" fill="#7c5450" opacity="0.27"/><polygon points="72,48 78,48 72,54" fill="#7c5450" opacity="0.22"/><polygon points="78,12 84,12 84,18" fill="#8c7468" opacity="0.22"/><polygon points="78,30 84,36 78,36" fill="#70504c" opacity="0.22"/><polygon points="78,36 84,42 78,42" fill="#b87074" opacity="0.24"/><polygon points="90,6 90,12 84,12" fill="#a88c70" opacity="0.21"/><polygon points="84,18 90,18 84,24" fill="#a88c70" opacity="0.12"/><polygon points="84,24 90,24 84,30" fill="#a88c70" opacity="0.29"/><polygon points="84,30 90,30 84,36" fill="#8c7468" opacity="0.14"/><polygon points="84,36 90,36 90,42" fill="#8c7468" opacity="0.29"/><polygon points="90,48 90,54 84,54" fill="#8c7468" opacity="0.21"/><polygon points="90,0 96,0 96,6" fill="#a88c70" opacity="0.18"/><polygon points="90,6 96,6 90,12" fill="#b87074" opacity="0.14"/><polygon points="96,18 96,24 90,24" fill="#7c5450" opacity="0.16"/><polygon points="90,30 96,36 90,36" fill="#7c5450" opacity="0.23"/><polygon points="90,36 96,36 90,42" fill="#a88c70" opacity="0.23"/><rect x="0" y="0" width="96" height="54" fill="#9a7068" opacity="0.28"/></g></svg></div>
<div class="cap" style="left:298.8px;top:187.8px">adwaita-<br>lock-3.15.jpg<br><i>440,0  kB</i></div>
<div class="th" style="left:431.0px;top:116.8px;width:100.4px;height:66.0px"><svg width="96" height="62" viewBox="0 0 96 62" preserveAspectRatio="none"><defs><radialGradient id="acg" cx="0.66" cy="0.42" r="0.3"><stop offset="0" stop-color="#123c88" stop-opacity="0.85"/><stop offset="0.6" stop-color="#123c88" stop-opacity="0.5"/><stop offset="1" stop-color="#123c88" stop-opacity="0"/></radialGradient><linearGradient id="acb" x1="0" y1="0" x2="1" y2="1"><stop offset="0" stop-color="#0c58b8"/><stop offset="0.5" stop-color="#0a56b8"/><stop offset="1" stop-color="#0d66cc"/></linearGradient><filter id="acf"><feGaussianBlur stdDeviation="0.6"/></filter><filter id="acf2"><feGaussianBlur stdDeviation="1.6"/></filter></defs><rect x="0" y="0" width="96" height="62" fill="url(#acb)"/><rect x="0" y="0" width="96" height="62" fill="url(#acg)"/><g filter="url(#acf2)"><rect x="8" y="37" width="60" height="12" fill="#1c3468" opacity="0.55"/><rect x="60" y="0" width="36" height="14" fill="#1470d0" opacity="0.5"/><rect x="0" y="50" width="96" height="12" fill="#0e64c8" opacity="0.5"/></g><g filter="url(#acf)"><rect x="13" y="13.4" width="8" height="18" fill="#f09410"/><rect x="20.5" y="14" width="3" height="17" fill="#6a7040"/><rect x="23" y="15" width="1" height="16" fill="#c03020" opacity="0.8"/><rect x="42.5" y="35" width="5" height="16" fill="#8a8030"/><rect x="44" y="35" width="8" height="12" fill="#f0a020"/><rect x="42.5" y="36" width="3" height="6" fill="#f09020"/><rect x="62.9" y="29.5" width="3.9" height="21.5" fill="#e07818"/><rect x="63.9" y="31" width="1.9" height="18" fill="#3a6a70"/><rect x="73.3" y="37.8" width="4.4" height="6.3" fill="#f0b010"/><rect x="22" y="51.4" width="5" height="6" fill="#b02040"/><rect x="56" y="37" width="2" height="13" fill="#a02838" opacity="0.7"/><rect x="30" y="40" width="1.5" height="8" fill="#a03030" opacity="0.5"/><rect x="36" y="40" width="1.2" height="8" fill="#a03030" opacity="0.5"/><rect x="25" y="38" width="1.2" height="10" fill="#c06020" opacity="0.6"/><rect x="67.5" y="36.4" width="26" height="0.9" fill="#e8b4d4" opacity="0.9"/><rect x="10" y="36.8" width="58" height="0.6" fill="#b08090" opacity="0.4"/><rect x="79" y="38" width="2" height="20" fill="#a0c0f0" opacity="0.45"/><rect x="84" y="38" width="3" height="22" fill="#c0d0f0" opacity="0.35"/><rect x="88" y="38" width="1.5" height="10" fill="#a0c0f0" opacity="0.3"/><rect x="9" y="8" width="8" height="1.5" fill="#a0b8e0" opacity="0.4"/></g></svg></div>
<div class="cap" style="left:431.0px;top:187.8px">Acrylic.jpg<br><i>4,4  MB</i></div>
<div class="th" style="left:563.2px;top:125.3px;width:100.4px;height:57.5px"><svg width="96" height="54" viewBox="0 0 96 54" preserveAspectRatio="none"><defs><filter id="cwf" x="0" y="0" width="100%" height="100%"><feGaussianBlur stdDeviation="0.4"/></filter></defs><g filter="url(#cwf)"><rect x="0" y="0" width="96" height="54" fill="#43578a"/><line x1="44.9" y1="29.4" x2="31.7" y2="50.5" stroke="#24325c" stroke-width="1.9" opacity="0.6"/><line x1="57.4" y1="31.6" x2="88.3" y2="48.2" stroke="#2a3a68" stroke-width="0.9" opacity="0.6"/><line x1="44.0" y1="27.1" x2="32.4" y2="31.2" stroke="#50689e" stroke-width="0.9" opacity="0.6"/><line x1="29.5" y1="19.9" x2="3.0" y2="10.7" stroke="#5a72a8" stroke-width="2.1" opacity="0.6"/><line x1="38.9" y1="22.6" x2="4.1" y2="8.0" stroke="#24325c" stroke-width="1.6" opacity="0.6"/><line x1="53.4" y1="31.7" x2="71.0" y2="47.2" stroke="#5a72a8" stroke-width="1.2" opacity="0.6"/><line x1="49.1" y1="22.2" x2="60.2" y2="2.1" stroke="#202c50" stroke-width="1.1" opacity="0.6"/><line x1="59.1" y1="32.8" x2="81.2" y2="45.2" stroke="#5a72a8" stroke-width="1.1" opacity="0.6"/><line x1="42.9" y1="19.0" x2="34.7" y2="4.9" stroke="#5a72a8" stroke-width="2.1" opacity="0.6"/><line x1="42.8" y1="30.0" x2="32.9" y2="39.4" stroke="#48609a" stroke-width="1.1" opacity="0.6"/><line x1="36.8" y1="21.9" x2="4.4" y2="8.8" stroke="#202c50" stroke-width="1.4" opacity="0.6"/><line x1="44.4" y1="24.3" x2="24.8" y2="11.5" stroke="#2a3a68" stroke-width="1.9" opacity="0.6"/><line x1="53.2" y1="33.1" x2="59.7" y2="40.4" stroke="#202c50" stroke-width="0.9" opacity="0.6"/><line x1="31.9" y1="21.4" x2="-0.4" y2="11.5" stroke="#324272" stroke-width="1.8" opacity="0.6"/><line x1="36.7" y1="20.4" x2="17.0" y2="9.9" stroke="#48609a" stroke-width="0.9" opacity="0.6"/><line x1="45.2" y1="37.5" x2="43.7" y2="47.0" stroke="#202c50" stroke-width="1.8" opacity="0.6"/><line x1="35.0" y1="13.3" x2="14.2" y2="-8.8" stroke="#324272" stroke-width="1.8" opacity="0.6"/><line x1="53.3" y1="21.7" x2="82.2" y2="1.8" stroke="#324272" stroke-width="1.0" opacity="0.6"/><line x1="49.3" y1="27.6" x2="73.8" y2="45.4" stroke="#2a3a68" stroke-width="1.8" opacity="0.6"/><line x1="32.2" y1="34.9" x2="12.2" y2="46.8" stroke="#2a3a68" stroke-width="1.4" opacity="0.6"/><line x1="30.0" y1="21.6" x2="-3.0" y2="13.2" stroke="#48609a" stroke-width="1.6" opacity="0.6"/><line x1="41.7" y1="10.8" x2="33.4" y2="-12.7" stroke="#50689e" stroke-width="2.1" opacity="0.6"/><line x1="50.0" y1="29.4" x2="59.9" y2="40.4" stroke="#2a3a68" stroke-width="0.8" opacity="0.6"/><line x1="49.6" y1="22.3" x2="58.6" y2="9.4" stroke="#2a3a68" stroke-width="1.4" opacity="0.6"/><line x1="38.7" y1="33.1" x2="12.4" y2="55.7" stroke="#202c50" stroke-width="2.0" opacity="0.6"/><line x1="60.1" y1="22.6" x2="90.8" y2="14.7" stroke="#50689e" stroke-width="2.1" opacity="0.6"/><line x1="50.3" y1="12.1" x2="56.7" y2="-14.6" stroke="#50689e" stroke-width="1.4" opacity="0.6"/><line x1="38.6" y1="31.3" x2="21.3" y2="42.1" stroke="#2a3a68" stroke-width="0.9" opacity="0.6"/><line x1="48.3" y1="29.8" x2="53.4" y2="45.4" stroke="#24325c" stroke-width="0.9" opacity="0.6"/><line x1="36.4" y1="22.2" x2="1.2" y2="9.7" stroke="#5a72a8" stroke-width="0.8" opacity="0.6"/><line x1="56.2" y1="18.6" x2="66.4" y2="10.4" stroke="#324272" stroke-width="2.1" opacity="0.6"/><line x1="38.6" y1="20.9" x2="27.8" y2="14.5" stroke="#50689e" stroke-width="2.2" opacity="0.6"/><line x1="36.5" y1="27.8" x2="24.2" y2="30.0" stroke="#24325c" stroke-width="1.8" opacity="0.6"/><line x1="46.4" y1="17.5" x2="44.5" y2="-7.0" stroke="#5a72a8" stroke-width="0.8" opacity="0.6"/><line x1="58.0" y1="23.2" x2="71.7" y2="19.7" stroke="#5a72a8" stroke-width="2.1" opacity="0.6"/><line x1="47.4" y1="20.1" x2="48.9" y2="-3.3" stroke="#24325c" stroke-width="1.8" opacity="0.6"/><line x1="46.4" y1="32.9" x2="45.4" y2="44.8" stroke="#48609a" stroke-width="1.1" opacity="0.6"/><line x1="36.3" y1="23.7" x2="8.2" y2="17.7" stroke="#5a72a8" stroke-width="1.9" opacity="0.6"/><line x1="64.3" y1="24.7" x2="98.3" y2="22.1" stroke="#48609a" stroke-width="1.4" opacity="0.6"/><line x1="48.8" y1="21.8" x2="57.0" y2="3.0" stroke="#202c50" stroke-width="0.8" opacity="0.6"/><line x1="53.9" y1="27.0" x2="71.4" y2="29.5" stroke="#202c50" stroke-width="1.6" opacity="0.6"/><line x1="37.8" y1="37.0" x2="20.1" y2="58.0" stroke="#324272" stroke-width="2.1" opacity="0.6"/><line x1="43.1" y1="29.6" x2="32.0" y2="39.7" stroke="#2a3a68" stroke-width="1.3" opacity="0.6"/><line x1="27.4" y1="27.7" x2="-0.8" y2="30.2" stroke="#24325c" stroke-width="1.5" opacity="0.6"/><line x1="37.6" y1="15.2" x2="30.4" y2="7.0" stroke="#202c50" stroke-width="1.0" opacity="0.6"/><line x1="35.7" y1="33.6" x2="23.5" y2="41.9" stroke="#2a3a68" stroke-width="1.4" opacity="0.6"/><line x1="44.7" y1="23.9" x2="19.4" y2="0.7" stroke="#202c50" stroke-width="1.4" opacity="0.6"/><line x1="31.5" y1="34.8" x2="5.7" y2="49.6" stroke="#2a3a68" stroke-width="2.2" opacity="0.6"/><line x1="59.4" y1="27.7" x2="83.0" y2="31.0" stroke="#202c50" stroke-width="1.0" opacity="0.6"/><line x1="56.1" y1="12.1" x2="69.8" y2="-9.0" stroke="#324272" stroke-width="1.0" opacity="0.6"/><line x1="44.7" y1="25.4" x2="12.3" y2="17.3" stroke="#202c50" stroke-width="1.7" opacity="0.6"/><line x1="28.5" y1="23.5" x2="5.8" y2="20.4" stroke="#48609a" stroke-width="1.1" opacity="0.6"/><line x1="48.8" y1="24.6" x2="60.3" y2="15.2" stroke="#5a72a8" stroke-width="1.1" opacity="0.6"/><line x1="41.3" y1="23.2" x2="22.0" y2="13.9" stroke="#2a3a68" stroke-width="0.9" opacity="0.6"/><line x1="45.9" y1="11.5" x2="44.0" y2="-12.3" stroke="#48609a" stroke-width="2.1" opacity="0.6"/><line x1="30.7" y1="33.1" x2="8.7" y2="42.7" stroke="#5a72a8" stroke-width="1.0" opacity="0.6"/><line x1="29.3" y1="25.1" x2="-3.9" y2="23.3" stroke="#5a72a8" stroke-width="0.8" opacity="0.6"/><line x1="48.6" y1="22.1" x2="55.9" y2="3.7" stroke="#202c50" stroke-width="1.0" opacity="0.6"/><line x1="60.2" y1="30.3" x2="84.2" y2="38.2" stroke="#50689e" stroke-width="1.9" opacity="0.6"/><line x1="56.5" y1="32.0" x2="70.2" y2="40.6" stroke="#324272" stroke-width="0.9" opacity="0.6"/><line x1="55.3" y1="30.7" x2="64.1" y2="35.7" stroke="#24325c" stroke-width="1.4" opacity="0.6"/><line x1="38.6" y1="20.2" x2="19.3" y2="7.1" stroke="#202c50" stroke-width="1.2" opacity="0.6"/><line x1="30.5" y1="25.3" x2="5.3" y2="24.3" stroke="#2a3a68" stroke-width="1.8" opacity="0.6"/><line x1="60.5" y1="15.4" x2="73.2" y2="5.4" stroke="#5a72a8" stroke-width="2.0" opacity="0.6"/><line x1="50.0" y1="33.7" x2="56.6" y2="50.9" stroke="#50689e" stroke-width="1.4" opacity="0.6"/><line x1="52.7" y1="28.2" x2="63.6" y2="32.5" stroke="#202c50" stroke-width="1.2" opacity="0.6"/><line x1="58.5" y1="34.9" x2="85.9" y2="56.1" stroke="#202c50" stroke-width="1.7" opacity="0.6"/><line x1="58.1" y1="37.2" x2="82.5" y2="61.6" stroke="#2a3a68" stroke-width="1.8" opacity="0.6"/><line x1="61.9" y1="34.0" x2="74.2" y2="40.6" stroke="#202c50" stroke-width="2.0" opacity="0.6"/><line x1="52.2" y1="32.6" x2="65.6" y2="49.9" stroke="#324272" stroke-width="1.4" opacity="0.6"/><line x1="44.7" y1="28.3" x2="31.7" y2="41.5" stroke="#324272" stroke-width="1.6" opacity="0.6"/><line x1="44.8" y1="26.7" x2="26.3" y2="32.5" stroke="#5a72a8" stroke-width="1.2" opacity="0.6"/><line x1="50.9" y1="25.2" x2="87.3" y2="17.9" stroke="#2a3a68" stroke-width="2.2" opacity="0.6"/><line x1="52.4" y1="29.3" x2="61.2" y2="34.8" stroke="#48609a" stroke-width="1.1" opacity="0.6"/><line x1="47.6" y1="12.6" x2="48.9" y2="-15.8" stroke="#202c50" stroke-width="1.9" opacity="0.6"/><line x1="46.7" y1="29.7" x2="44.7" y2="59.8" stroke="#5a72a8" stroke-width="1.5" opacity="0.6"/><line x1="43.7" y1="31.0" x2="27.9" y2="55.0" stroke="#2a3a68" stroke-width="1.4" opacity="0.6"/><line x1="64.0" y1="32.6" x2="90.0" y2="42.8" stroke="#48609a" stroke-width="1.2" opacity="0.6"/><line x1="42.3" y1="23.0" x2="28.4" y2="14.0" stroke="#24325c" stroke-width="1.4" opacity="0.6"/><line x1="40.6" y1="34.1" x2="20.6" y2="59.7" stroke="#324272" stroke-width="1.7" opacity="0.6"/><line x1="61.2" y1="29.2" x2="98.0" y2="37.4" stroke="#2a3a68" stroke-width="1.2" opacity="0.6"/><line x1="54.9" y1="39.6" x2="67.0" y2="60.6" stroke="#5a72a8" stroke-width="1.9" opacity="0.6"/><line x1="44.3" y1="34.5" x2="40.5" y2="46.4" stroke="#324272" stroke-width="1.9" opacity="0.6"/><line x1="49.7" y1="25.9" x2="60.2" y2="25.6" stroke="#5a72a8" stroke-width="1.6" opacity="0.6"/><line x1="50.9" y1="33.8" x2="65.0" y2="62.1" stroke="#24325c" stroke-width="1.7" opacity="0.6"/><line x1="38.9" y1="17.1" x2="23.4" y2="-0.0" stroke="#50689e" stroke-width="2.2" opacity="0.6"/><line x1="44.9" y1="30.4" x2="38.9" y2="43.0" stroke="#2a3a68" stroke-width="2.0" opacity="0.6"/><line x1="43.4" y1="15.6" x2="37.4" y2="-1.4" stroke="#324272" stroke-width="2.2" opacity="0.6"/><line x1="48.2" y1="24.5" x2="63.1" y2="4.8" stroke="#324272" stroke-width="1.4" opacity="0.6"/><line x1="60.1" y1="29.8" x2="80.3" y2="35.7" stroke="#5a72a8" stroke-width="1.7" opacity="0.6"/><ellipse cx="42.1" cy="44.2" rx="1.9" ry="0.5" fill="#a8a468" opacity="0.57" transform="rotate(105 42.1 44.2)"/><ellipse cx="46.8" cy="27.5" rx="0.9" ry="0.9" fill="#d8d8d0" opacity="0.89" transform="rotate(99 46.8 27.5)"/><ellipse cx="23.2" cy="20.6" rx="1.9" ry="0.5" fill="#a8a468" opacity="0.57" transform="rotate(-167 23.2 20.6)"/><ellipse cx="40.3" cy="34.5" rx="1.4" ry="0.7" fill="#d8d8d0" opacity="0.58" transform="rotate(128 40.3 34.5)"/><ellipse cx="44.6" cy="25.9" rx="0.9" ry="0.8" fill="#d8d8d0" opacity="0.56" transform="rotate(-179 44.6 25.9)"/><ellipse cx="18.6" cy="13.1" rx="2.3" ry="0.5" fill="#b8c4dc" opacity="0.88" transform="rotate(-156 18.6 13.1)"/><ellipse cx="58.5" cy="14.7" rx="1.7" ry="0.6" fill="#9c9c70" opacity="0.63" transform="rotate(-45 58.5 14.7)"/><ellipse cx="65.5" cy="24.7" rx="1.6" ry="0.7" fill="#8c98a8" opacity="0.56" transform="rotate(-4 65.5 24.7)"/><ellipse cx="12.2" cy="23.9" rx="2.4" ry="0.5" fill="#9c9c70" opacity="0.71" transform="rotate(-176 12.2 23.9)"/><ellipse cx="0.2" cy="5.5" rx="3.2" ry="0.7" fill="#8c98a8" opacity="0.53" transform="rotate(-156 0.2 5.5)"/><ellipse cx="89.7" cy="34.6" rx="2.8" ry="0.6" fill="#b4aa64" opacity="0.68" transform="rotate(11 89.7 34.6)"/><ellipse cx="52.1" cy="27.3" rx="1.0" ry="0.8" fill="#8ca4d0" opacity="0.7" transform="rotate(14 52.1 27.3)"/><ellipse cx="97.6" cy="26.8" rx="3.1" ry="0.9" fill="#8c98a8" opacity="0.86" transform="rotate(1 97.6 26.8)"/><ellipse cx="80.0" cy="42.2" rx="2.6" ry="0.8" fill="#8c98a8" opacity="0.6" transform="rotate(26 80.0 42.2)"/><ellipse cx="70.4" cy="34.9" rx="2.0" ry="0.8" fill="#8c98a8" opacity="0.59" transform="rotate(21 70.4 34.9)"/><ellipse cx="25.6" cy="3.9" rx="2.4" ry="0.7" fill="#b4aa64" opacity="0.77" transform="rotate(-134 25.6 3.9)"/><ellipse cx="39.2" cy="18.7" rx="1.4" ry="0.6" fill="#b8c4dc" opacity="0.76" transform="rotate(-137 39.2 18.7)"/><ellipse cx="72.0" cy="46.9" rx="2.5" ry="0.6" fill="#c8bc84" opacity="0.77" transform="rotate(40 72.0 46.9)"/><ellipse cx="37.1" cy="54.3" rx="2.6" ry="0.7" fill="#c8bc84" opacity="0.81" transform="rotate(109 37.1 54.3)"/><ellipse cx="87.4" cy="24.7" rx="2.6" ry="0.9" fill="#a8a468" opacity="0.87" transform="rotate(-2 87.4 24.7)"/><ellipse cx="83.1" cy="29.0" rx="2.4" ry="0.9" fill="#9c9c70" opacity="0.68" transform="rotate(5 83.1 29.0)"/><ellipse cx="44.3" cy="42.9" rx="1.8" ry="0.5" fill="#c0b470" opacity="0.54" transform="rotate(99 44.3 42.9)"/><ellipse cx="46.6" cy="6.5" rx="2.0" ry="0.8" fill="#8ca4d0" opacity="0.7" transform="rotate(-91 46.6 6.5)"/><ellipse cx="82.6" cy="3.0" rx="2.9" ry="0.6" fill="#9cb0d8" opacity="0.56" transform="rotate(-33 82.6 3.0)"/><ellipse cx="90.8" cy="15.3" rx="2.9" ry="0.6" fill="#b8c4dc" opacity="0.65" transform="rotate(-14 90.8 15.3)"/><ellipse cx="68.7" cy="41.4" rx="2.1" ry="0.8" fill="#a8a468" opacity="0.84" transform="rotate(35 68.7 41.4)"/><ellipse cx="87.4" cy="54.5" rx="3.3" ry="0.5" fill="#8c98a8" opacity="0.8" transform="rotate(35 87.4 54.5)"/><ellipse cx="46.8" cy="34.4" rx="1.3" ry="0.9" fill="#9cb0d8" opacity="0.74" transform="rotate(92 46.8 34.4)"/><ellipse cx="24.7" cy="46.1" rx="2.4" ry="0.8" fill="#a8a468" opacity="0.61" transform="rotate(138 24.7 46.1)"/><ellipse cx="89.9" cy="36.8" rx="2.8" ry="0.9" fill="#8c98a8" opacity="0.6" transform="rotate(14 89.9 36.8)"/><ellipse cx="43.2" cy="54.9" rx="2.5" ry="0.8" fill="#c0b470" opacity="0.81" transform="rotate(98 43.2 54.9)"/><ellipse cx="40.8" cy="28.3" rx="1.1" ry="0.9" fill="#9cb0d8" opacity="0.88" transform="rotate(160 40.8 28.3)"/><ellipse cx="1.7" cy="15.1" rx="2.9" ry="0.7" fill="#9cb0d8" opacity="0.8" transform="rotate(-167 1.7 15.1)"/><ellipse cx="30.1" cy="9.8" rx="2.0" ry="0.5" fill="#8ca4d0" opacity="0.69" transform="rotate(-136 30.1 9.8)"/><ellipse cx="31.4" cy="43.5" rx="2.1" ry="0.8" fill="#8c98a8" opacity="0.76" transform="rotate(132 31.4 43.5)"/><ellipse cx="26.6" cy="36.2" rx="1.9" ry="0.7" fill="#c8bc84" opacity="0.66" transform="rotate(153 26.6 36.2)"/><ellipse cx="56.6" cy="38.7" rx="1.7" ry="0.7" fill="#c0b470" opacity="0.82" transform="rotate(53 56.6 38.7)"/><ellipse cx="12.7" cy="17.6" rx="2.4" ry="0.6" fill="#9cb0d8" opacity="0.72" transform="rotate(-166 12.7 17.6)"/><ellipse cx="47.8" cy="41.3" rx="1.7" ry="0.5" fill="#9c9c70" opacity="0.6" transform="rotate(87 47.8 41.3)"/><ellipse cx="84.1" cy="2.2" rx="3.0" ry="0.8" fill="#9cb0d8" opacity="0.58" transform="rotate(-33 84.1 2.2)"/><ellipse cx="5.4" cy="26.4" rx="2.7" ry="0.5" fill="#a8a468" opacity="0.7" transform="rotate(179 5.4 26.4)"/><ellipse cx="52.6" cy="45.4" rx="2.0" ry="0.6" fill="#c0b470" opacity="0.76" transform="rotate(74 52.6 45.4)"/><ellipse cx="20.8" cy="35.0" rx="2.1" ry="0.5" fill="#b4aa64" opacity="0.67" transform="rotate(161 20.8 35.0)"/><ellipse cx="84.0" cy="20.4" rx="2.5" ry="0.8" fill="#8ca4d0" opacity="0.89" transform="rotate(-9 84.0 20.4)"/><ellipse cx="47.1" cy="37.5" rx="1.5" ry="0.5" fill="#c0b470" opacity="0.89" transform="rotate(89 47.1 37.5)"/><ellipse cx="87.1" cy="50.5" rx="3.1" ry="0.7" fill="#8c98a8" opacity="0.81" transform="rotate(31 87.1 50.5)"/><ellipse cx="7.9" cy="34.1" rx="2.6" ry="0.5" fill="#b4aa64" opacity="0.55" transform="rotate(168 7.9 34.1)"/><ellipse cx="39.7" cy="23.4" rx="1.2" ry="0.9" fill="#d8d8d0" opacity="0.75" transform="rotate(-161 39.7 23.4)"/><ellipse cx="12.2" cy="21.3" rx="2.4" ry="0.5" fill="#b4aa64" opacity="0.71" transform="rotate(-172 12.2 21.3)"/><ellipse cx="18.5" cy="13.7" rx="2.3" ry="0.5" fill="#8ca4d0" opacity="0.71" transform="rotate(-157 18.5 13.7)"/><ellipse cx="73.9" cy="25.5" rx="2.0" ry="0.7" fill="#a8a468" opacity="0.85" transform="rotate(-1 73.9 25.5)"/><ellipse cx="23.0" cy="28.8" rx="1.9" ry="0.5" fill="#c0b470" opacity="0.66" transform="rotate(173 23.0 28.8)"/><ellipse cx="41.0" cy="19.8" rx="1.3" ry="0.7" fill="#b8c4dc" opacity="0.77" transform="rotate(-134 41.0 19.8)"/><ellipse cx="24.5" cy="35.3" rx="2.0" ry="0.6" fill="#8c98a8" opacity="0.65" transform="rotate(158 24.5 35.3)"/><ellipse cx="0.4" cy="27.6" rx="2.9" ry="0.6" fill="#8c98a8" opacity="0.77" transform="rotate(178 0.4 27.6)"/><ellipse cx="49.8" cy="43.5" rx="1.9" ry="0.5" fill="#a8a468" opacity="0.75" transform="rotate(81 49.8 43.5)"/><ellipse cx="5.2" cy="0.0" rx="3.2" ry="0.9" fill="#c8d0e0" opacity="0.56" transform="rotate(-148 5.2 0.0)"/><ellipse cx="29.0" cy="36.7" rx="1.8" ry="0.5" fill="#9c9c70" opacity="0.52" transform="rotate(149 29.0 36.7)"/><ellipse cx="77.8" cy="35.2" rx="2.3" ry="0.8" fill="#8c98a8" opacity="0.79" transform="rotate(17 77.8 35.2)"/><ellipse cx="36.9" cy="39.9" rx="1.7" ry="0.8" fill="#9c9c70" opacity="0.51" transform="rotate(126 36.9 39.9)"/><ellipse cx="30.4" cy="5.1" rx="2.3" ry="0.6" fill="#d8d8d0" opacity="0.54" transform="rotate(-128 30.4 5.1)"/><ellipse cx="58.3" cy="30.5" rx="1.4" ry="0.9" fill="#9cb0d8" opacity="0.55" transform="rotate(22 58.3 30.5)"/><ellipse cx="69.0" cy="22.2" rx="1.8" ry="0.8" fill="#d8d8d0" opacity="0.67" transform="rotate(-10 69.0 22.2)"/><ellipse cx="82.3" cy="34.5" rx="2.5" ry="0.7" fill="#a8a468" opacity="0.68" transform="rotate(13 82.3 34.5)"/><ellipse cx="3.5" cy="31.3" rx="2.8" ry="0.8" fill="#c0b470" opacity="0.81" transform="rotate(173 3.5 31.3)"/><ellipse cx="54.5" cy="27.5" rx="1.1" ry="0.8" fill="#c8d0e0" opacity="0.52" transform="rotate(11 54.5 27.5)"/><ellipse cx="50.7" cy="33.8" rx="1.3" ry="0.6" fill="#8ca4d0" opacity="0.61" transform="rotate(64 50.7 33.8)"/><ellipse cx="88.9" cy="17.4" rx="2.8" ry="0.9" fill="#d8d8d0" opacity="0.62" transform="rotate(-12 88.9 17.4)"/><ellipse cx="94.4" cy="41.5" rx="3.1" ry="0.7" fill="#b4aa64" opacity="0.88" transform="rotate(18 94.4 41.5)"/><ellipse cx="78.4" cy="19.0" rx="2.3" ry="0.8" fill="#9cb0d8" opacity="0.55" transform="rotate(-13 78.4 19.0)"/><ellipse cx="43.6" cy="26.1" rx="1.0" ry="0.8" fill="#d8d8d0" opacity="0.81" transform="rotate(179 43.6 26.1)"/><ellipse cx="23.8" cy="12.1" rx="2.1" ry="0.8" fill="#d8d8d0" opacity="0.74" transform="rotate(-149 23.8 12.1)"/><ellipse cx="14.0" cy="24.2" rx="2.3" ry="0.6" fill="#c0b470" opacity="0.53" transform="rotate(-177 14.0 24.2)"/><ellipse cx="86.7" cy="32.4" rx="2.6" ry="0.5" fill="#a8a468" opacity="0.67" transform="rotate(9 86.7 32.4)"/><ellipse cx="56.5" cy="31.5" rx="1.3" ry="0.5" fill="#8ca4d0" opacity="0.54" transform="rotate(30 56.5 31.5)"/><ellipse cx="-0.2" cy="26.3" rx="2.9" ry="0.5" fill="#c8bc84" opacity="0.55" transform="rotate(180 -0.2 26.3)"/><ellipse cx="50.8" cy="55.9" rx="2.6" ry="0.8" fill="#8c98a8" opacity="0.81" transform="rotate(83 50.8 55.9)"/><ellipse cx="39.6" cy="45.5" rx="2.0" ry="0.6" fill="#a8a468" opacity="0.8" transform="rotate(111 39.6 45.5)"/><ellipse cx="54.9" cy="43.9" rx="1.9" ry="0.6" fill="#c0b470" opacity="0.61" transform="rotate(66 54.9 43.9)"/><ellipse cx="64.8" cy="17.2" rx="1.8" ry="0.9" fill="#d8d8d0" opacity="0.7" transform="rotate(-26 64.8 17.2)"/><ellipse cx="76.7" cy="42.7" rx="2.5" ry="0.8" fill="#c0b470" opacity="0.87" transform="rotate(29 76.7 42.7)"/><ellipse cx="73.9" cy="31.2" rx="2.1" ry="0.5" fill="#b4aa64" opacity="0.74" transform="rotate(11 73.9 31.2)"/><ellipse cx="57.2" cy="11.6" rx="1.8" ry="0.8" fill="#8ca4d0" opacity="0.68" transform="rotate(-55 57.2 11.6)"/><ellipse cx="61.2" cy="22.2" rx="1.5" ry="0.6" fill="#9c9c70" opacity="0.51" transform="rotate(-15 61.2 22.2)"/><ellipse cx="42.2" cy="31.6" rx="1.2" ry="0.5" fill="#d8d8d0" opacity="0.79" transform="rotate(130 42.2 31.6)"/><ellipse cx="91.0" cy="6.2" rx="3.1" ry="0.8" fill="#c8bc84" opacity="0.57" transform="rotate(-24 91.0 6.2)"/><ellipse cx="38.5" cy="41.5" rx="1.8" ry="0.7" fill="#c8bc84" opacity="0.53" transform="rotate(119 38.5 41.5)"/><ellipse cx="73.7" cy="40.8" rx="2.3" ry="0.5" fill="#9c9c70" opacity="0.71" transform="rotate(29 73.7 40.8)"/><ellipse cx="27.9" cy="5.5" rx="2.3" ry="0.8" fill="#d8d8d0" opacity="0.67" transform="rotate(-133 27.9 5.5)"/><ellipse cx="93.1" cy="37.6" rx="3.0" ry="0.6" fill="#a8a468" opacity="0.51" transform="rotate(14 93.1 37.6)"/><ellipse cx="26.7" cy="6.5" rx="2.3" ry="0.6" fill="#c8d0e0" opacity="0.56" transform="rotate(-136 26.7 6.5)"/><ellipse cx="57.4" cy="32.7" rx="1.4" ry="0.8" fill="#8ca4d0" opacity="0.68" transform="rotate(33 57.4 32.7)"/><ellipse cx="49.4" cy="29.0" rx="1.0" ry="0.5" fill="#8ca4d0" opacity="0.82" transform="rotate(51 49.4 29.0)"/><ellipse cx="13.9" cy="44.8" rx="2.7" ry="0.8" fill="#a8a468" opacity="0.57" transform="rotate(150 13.9 44.8)"/><ellipse cx="35.8" cy="37.9" rx="1.7" ry="0.9" fill="#c0b470" opacity="0.54" transform="rotate(133 35.8 37.9)"/><ellipse cx="68.4" cy="22.6" rx="1.8" ry="0.9" fill="#c8d0e0" opacity="0.69" transform="rotate(-9 68.4 22.6)"/><ellipse cx="5.4" cy="52.5" rx="3.3" ry="0.8" fill="#9c9c70" opacity="0.86" transform="rotate(147 5.4 52.5)"/><ellipse cx="15.6" cy="3.6" rx="2.7" ry="0.5" fill="#9cb0d8" opacity="0.59" transform="rotate(-144 15.6 3.6)"/><ellipse cx="15.4" cy="43.3" rx="2.6" ry="0.6" fill="#c8bc84" opacity="0.56" transform="rotate(151 15.4 43.3)"/><ellipse cx="97.5" cy="19.0" rx="3.1" ry="0.8" fill="#8ca4d0" opacity="0.77" transform="rotate(-8 97.5 19.0)"/><ellipse cx="32.4" cy="6.8" rx="2.1" ry="0.7" fill="#9cb0d8" opacity="0.75" transform="rotate(-127 32.4 6.8)"/><ellipse cx="35.1" cy="50.3" rx="2.4" ry="0.6" fill="#9c9c70" opacity="0.66" transform="rotate(116 35.1 50.3)"/><ellipse cx="21.1" cy="47.3" rx="2.5" ry="0.5" fill="#c0b470" opacity="0.75" transform="rotate(140 21.1 47.3)"/><ellipse cx="22.7" cy="27.2" rx="1.9" ry="0.8" fill="#9c9c70" opacity="0.68" transform="rotate(177 22.7 27.2)"/><ellipse cx="62.9" cy="51.1" rx="2.5" ry="0.5" fill="#b4aa64" opacity="0.64" transform="rotate(58 62.9 51.1)"/><ellipse cx="13.3" cy="54.5" rx="3.1" ry="0.7" fill="#9c9c70" opacity="0.52" transform="rotate(140 13.3 54.5)"/><ellipse cx="38.5" cy="18.7" rx="1.4" ry="0.8" fill="#d8d8d0" opacity="0.7" transform="rotate(-139 38.5 18.7)"/><ellipse cx="83.2" cy="35.6" rx="2.5" ry="0.7" fill="#c8bc84" opacity="0.81" transform="rotate(15 83.2 35.6)"/><ellipse cx="58.2" cy="27.4" rx="1.3" ry="0.8" fill="#8ca4d0" opacity="0.83" transform="rotate(7 58.2 27.4)"/><ellipse cx="64.0" cy="18.6" rx="1.7" ry="0.5" fill="#c0b470" opacity="0.64" transform="rotate(-24 64.0 18.6)"/><ellipse cx="47.7" cy="11.6" rx="1.7" ry="0.9" fill="#a8a468" opacity="0.68" transform="rotate(-87 47.7 11.6)"/><ellipse cx="5.0" cy="30.0" rx="2.7" ry="0.7" fill="#9c9c70" opacity="0.63" transform="rotate(175 5.0 30.0)"/><ellipse cx="67.3" cy="29.6" rx="1.7" ry="0.7" fill="#c0b470" opacity="0.61" transform="rotate(10 67.3 29.6)"/><ellipse cx="31.8" cy="47.4" rx="2.3" ry="0.5" fill="#a8a468" opacity="0.71" transform="rotate(125 31.8 47.4)"/><ellipse cx="26.4" cy="8.2" rx="2.2" ry="0.7" fill="#9c9c70" opacity="0.78" transform="rotate(-139 26.4 8.2)"/><ellipse cx="67.2" cy="14.4" rx="1.9" ry="0.8" fill="#9cb0d8" opacity="0.65" transform="rotate(-30 67.2 14.4)"/><ellipse cx="24.3" cy="42.8" rx="2.2" ry="0.6" fill="#c0b470" opacity="0.81" transform="rotate(143 24.3 42.8)"/><ellipse cx="27.8" cy="31.5" rx="1.7" ry="0.9" fill="#8c98a8" opacity="0.62" transform="rotate(164 27.8 31.5)"/><ellipse cx="18.4" cy="23.8" rx="2.1" ry="0.9" fill="#9c9c70" opacity="0.86" transform="rotate(-176 18.4 23.8)"/><ellipse cx="51.9" cy="46.4" rx="2.0" ry="0.6" fill="#8c98a8" opacity="0.71" transform="rotate(76 51.9 46.4)"/><ellipse cx="60.6" cy="18.1" rx="1.6" ry="0.5" fill="#c8d0e0" opacity="0.5" transform="rotate(-30 60.6 18.1)"/><ellipse cx="37.7" cy="35.0" rx="1.5" ry="0.7" fill="#a8a468" opacity="0.67" transform="rotate(136 37.7 35.0)"/><ellipse cx="41.5" cy="38.3" rx="1.6" ry="0.7" fill="#a8a468" opacity="0.69" transform="rotate(114 41.5 38.3)"/><ellipse cx="47.7" cy="39.9" rx="1.6" ry="0.5" fill="#b4aa64" opacity="0.56" transform="rotate(87 47.7 39.9)"/><ellipse cx="33.6" cy="8.9" rx="2.0" ry="0.5" fill="#b4aa64" opacity="0.83" transform="rotate(-128 33.6 8.9)"/><ellipse cx="80.2" cy="6.1" rx="2.7" ry="0.9" fill="#9c9c70" opacity="0.79" transform="rotate(-31 80.2 6.1)"/><ellipse cx="85.2" cy="34.1" rx="2.6" ry="0.5" fill="#c8bc84" opacity="0.56" transform="rotate(12 85.2 34.1)"/><ellipse cx="59.7" cy="20.1" rx="1.5" ry="0.9" fill="#8c98a8" opacity="0.56" transform="rotate(-25 59.7 20.1)"/><ellipse cx="2.6" cy="24.5" rx="2.8" ry="0.5" fill="#9c9c70" opacity="0.62" transform="rotate(-178 2.6 24.5)"/><ellipse cx="44.1" cy="32.7" rx="1.2" ry="0.8" fill="#9cb0d8" opacity="0.5" transform="rotate(114 44.1 32.7)"/><ellipse cx="-0.3" cy="33.9" rx="3.0" ry="0.5" fill="#c8bc84" opacity="0.9" transform="rotate(171 -0.3 33.9)"/><ellipse cx="85.7" cy="54.4" rx="3.2" ry="0.9" fill="#8c98a8" opacity="0.61" transform="rotate(36 85.7 54.4)"/><ellipse cx="88.8" cy="36.7" rx="2.8" ry="0.6" fill="#8c98a8" opacity="0.82" transform="rotate(14 88.8 36.7)"/><ellipse cx="21.1" cy="23.1" rx="2.0" ry="0.5" fill="#c0b470" opacity="0.7" transform="rotate(-174 21.1 23.1)"/><ellipse cx="59.1" cy="12.0" rx="1.8" ry="0.5" fill="#d8d8d0" opacity="0.66" transform="rotate(-49 59.1 12.0)"/><ellipse cx="20.9" cy="11.6" rx="2.3" ry="0.9" fill="#8c98a8" opacity="0.84" transform="rotate(-151 20.9 11.6)"/><ellipse cx="11.0" cy="19.7" rx="2.5" ry="0.8" fill="#c8d0e0" opacity="0.67" transform="rotate(-170 11.0 19.7)"/><ellipse cx="38.9" cy="42.0" rx="1.8" ry="0.7" fill="#9c9c70" opacity="0.73" transform="rotate(117 38.9 42.0)"/><ellipse cx="50.5" cy="30.9" rx="1.1" ry="0.5" fill="#c8d0e0" opacity="0.87" transform="rotate(54 50.5 30.9)"/><ellipse cx="36.9" cy="37.2" rx="1.6" ry="0.5" fill="#b4aa64" opacity="0.56" transform="rotate(132 36.9 37.2)"/><ellipse cx="41.6" cy="20.9" rx="1.2" ry="0.8" fill="#c8d0e0" opacity="0.53" transform="rotate(-137 41.6 20.9)"/><ellipse cx="20.4" cy="13.2" rx="2.2" ry="0.9" fill="#9c9c70" opacity="0.53" transform="rotate(-154 20.4 13.2)"/><ellipse cx="61.3" cy="22.1" rx="1.5" ry="0.5" fill="#c8d0e0" opacity="0.88" transform="rotate(-15 61.3 22.1)"/><ellipse cx="88.5" cy="6.5" rx="3.0" ry="0.7" fill="#d8d8d0" opacity="0.55" transform="rotate(-25 88.5 6.5)"/><ellipse cx="38.7" cy="47.8" rx="2.2" ry="0.5" fill="#a8a468" opacity="0.6" transform="rotate(111 38.7 47.8)"/><ellipse cx="27.2" cy="42.2" rx="2.1" ry="0.7" fill="#9c9c70" opacity="0.84" transform="rotate(141 27.2 42.2)"/><ellipse cx="41.7" cy="22.3" rx="1.1" ry="0.5" fill="#9cb0d8" opacity="0.71" transform="rotate(-145 41.7 22.3)"/><ellipse cx="77.0" cy="42.0" rx="2.5" ry="0.7" fill="#b4aa64" opacity="0.59" transform="rotate(28 77.0 42.0)"/><ellipse cx="55.9" cy="18.1" rx="1.4" ry="0.5" fill="#d8d8d0" opacity="0.5" transform="rotate(-41 55.9 18.1)"/><ellipse cx="49.2" cy="25.8" rx="0.9" ry="0.5" fill="#9cb0d8" opacity="0.78" transform="rotate(-6 49.2 25.8)"/><ellipse cx="-0.2" cy="2.7" rx="3.3" ry="0.9" fill="#8ca4d0" opacity="0.61" transform="rotate(-154 -0.2 2.7)"/><ellipse cx="31.6" cy="26.1" rx="1.5" ry="0.8" fill="#8c98a8" opacity="0.7" transform="rotate(180 31.6 26.1)"/><ellipse cx="87.9" cy="24.3" rx="2.6" ry="0.7" fill="#b4aa64" opacity="0.64" transform="rotate(-2 87.9 24.3)"/><ellipse cx="20.0" cy="40.5" rx="2.3" ry="0.5" fill="#8c98a8" opacity="0.86" transform="rotate(152 20.0 40.5)"/><ellipse cx="69.2" cy="28.7" rx="1.8" ry="0.6" fill="#a8a468" opacity="0.72" transform="rotate(7 69.2 28.7)"/><ellipse cx="76.7" cy="48.8" rx="2.7" ry="0.8" fill="#8c98a8" opacity="0.76" transform="rotate(38 76.7 48.8)"/><ellipse cx="29.8" cy="44.1" rx="2.1" ry="0.8" fill="#c0b470" opacity="0.68" transform="rotate(134 29.8 44.1)"/><ellipse cx="19.2" cy="18.7" rx="2.1" ry="0.7" fill="#d8d8d0" opacity="0.55" transform="rotate(-165 19.2 18.7)"/><ellipse cx="48.6" cy="42.1" rx="1.8" ry="0.8" fill="#a8a468" opacity="0.83" transform="rotate(84 48.6 42.1)"/><ellipse cx="11.6" cy="1.9" rx="2.9" ry="0.6" fill="#8c98a8" opacity="0.71" transform="rotate(-146 11.6 1.9)"/><ellipse cx="62.8" cy="44.9" rx="2.1" ry="0.6" fill="#c0b470" opacity="0.88" transform="rotate(50 62.8 44.9)"/><ellipse cx="66.6" cy="25.5" rx="1.7" ry="0.5" fill="#8c98a8" opacity="0.65" transform="rotate(-1 66.6 25.5)"/><ellipse cx="97.3" cy="22.2" rx="3.1" ry="0.6" fill="#c8bc84" opacity="0.54" transform="rotate(-4 97.3 22.2)"/><ellipse cx="70.0" cy="15.3" rx="2.0" ry="0.5" fill="#c8bc84" opacity="0.66" transform="rotate(-25 70.0 15.3)"/><ellipse cx="2.9" cy="25.9" rx="2.8" ry="0.5" fill="#c8bc84" opacity="0.6" transform="rotate(-180 2.9 25.9)"/><ellipse cx="46.8" cy="24.1" rx="0.9" ry="0.9" fill="#b8c4dc" opacity="0.67" transform="rotate(-96 46.8 24.1)"/><ellipse cx="3.4" cy="9.6" rx="3.0" ry="0.8" fill="#b8c4dc" opacity="0.76" transform="rotate(-159 3.4 9.6)"/><ellipse cx="78.9" cy="2.8" rx="2.8" ry="0.8" fill="#c0b470" opacity="0.76" transform="rotate(-36 78.9 2.8)"/><ellipse cx="19.3" cy="32.2" rx="2.1" ry="0.8" fill="#8c98a8" opacity="0.86" transform="rotate(167 19.3 32.2)"/><ellipse cx="48.6" cy="51.1" rx="2.3" ry="0.7" fill="#8c98a8" opacity="0.6" transform="rotate(86 48.6 51.1)"/><ellipse cx="14.9" cy="38.5" rx="2.4" ry="0.8" fill="#9c9c70" opacity="0.71" transform="rotate(159 14.9 38.5)"/><ellipse cx="70.4" cy="12.3" rx="2.1" ry="0.9" fill="#9cb0d8" opacity="0.54" transform="rotate(-30 70.4 12.3)"/><ellipse cx="46.8" cy="43.4" rx="1.8" ry="0.8" fill="#8c98a8" opacity="0.88" transform="rotate(91 46.8 43.4)"/><ellipse cx="32.4" cy="24.7" rx="1.5" ry="0.7" fill="#9c9c70" opacity="0.58" transform="rotate(-175 32.4 24.7)"/><ellipse cx="42.2" cy="26.6" rx="1.0" ry="0.7" fill="#d8d8d0" opacity="0.66" transform="rotate(173 42.2 26.6)"/><ellipse cx="68.5" cy="20.5" rx="1.8" ry="0.7" fill="#c8bc84" opacity="0.87" transform="rotate(-14 68.5 20.5)"/><ellipse cx="30.5" cy="11.5" rx="1.9" ry="0.5" fill="#c8d0e0" opacity="0.67" transform="rotate(-139 30.5 11.5)"/><ellipse cx="6.0" cy="42.8" rx="2.9" ry="0.7" fill="#a8a468" opacity="0.54" transform="rotate(158 6.0 42.8)"/><ellipse cx="36.0" cy="49.7" rx="2.3" ry="0.9" fill="#9c9c70" opacity="0.9" transform="rotate(115 36.0 49.7)"/><ellipse cx="82.4" cy="19.3" rx="2.4" ry="0.8" fill="#c8d0e0" opacity="0.75" transform="rotate(-11 82.4 19.3)"/><ellipse cx="6.7" cy="31.9" rx="2.6" ry="0.8" fill="#c0b470" opacity="0.56" transform="rotate(172 6.7 31.9)"/><ellipse cx="56.6" cy="1.4" rx="2.3" ry="0.7" fill="#9c9c70" opacity="0.81" transform="rotate(-69 56.6 1.4)"/><ellipse cx="30.8" cy="0.7" rx="2.5" ry="0.6" fill="#a8a468" opacity="0.76" transform="rotate(-123 30.8 0.7)"/><ellipse cx="30.9" cy="51.5" rx="2.5" ry="0.7" fill="#9c9c70" opacity="0.76" transform="rotate(122 30.9 51.5)"/><ellipse cx="53.3" cy="19.8" rx="1.3" ry="0.9" fill="#8ca4d0" opacity="0.81" transform="rotate(-44 53.3 19.8)"/><ellipse cx="43.9" cy="23.4" rx="1.0" ry="0.5" fill="#c8d0e0" opacity="0.53" transform="rotate(-140 43.9 23.4)"/><ellipse cx="0.5" cy="7.3" rx="3.2" ry="0.6" fill="#9cb0d8" opacity="0.56" transform="rotate(-158 0.5 7.3)"/><ellipse cx="88.5" cy="4.6" rx="3.1" ry="0.9" fill="#8ca4d0" opacity="0.54" transform="rotate(-27 88.5 4.6)"/><ellipse cx="80.0" cy="8.4" rx="2.6" ry="0.5" fill="#a8a468" opacity="0.78" transform="rotate(-28 80.0 8.4)"/><ellipse cx="-0.6" cy="19.0" rx="3.0" ry="0.7" fill="#c8d0e0" opacity="0.61" transform="rotate(-172 -0.6 19.0)"/><ellipse cx="48.8" cy="39.3" rx="1.6" ry="0.7" fill="#c8bc84" opacity="0.69" transform="rotate(82 48.8 39.3)"/><ellipse cx="85.8" cy="6.3" rx="2.9" ry="0.7" fill="#b8c4dc" opacity="0.85" transform="rotate(-27 85.8 6.3)"/><ellipse cx="6.8" cy="32.2" rx="2.6" ry="0.6" fill="#8c98a8" opacity="0.69" transform="rotate(171 6.8 32.2)"/><ellipse cx="37.7" cy="12.1" rx="1.7" ry="0.5" fill="#c8d0e0" opacity="0.52" transform="rotate(-124 37.7 12.1)"/><ellipse cx="52.1" cy="16.2" rx="1.4" ry="0.5" fill="#b8c4dc" opacity="0.79" transform="rotate(-63 52.1 16.2)"/><ellipse cx="25.6" cy="9.9" rx="2.2" ry="0.6" fill="#a8a468" opacity="0.81" transform="rotate(-143 25.6 9.9)"/><ellipse cx="40.5" cy="48.3" rx="2.2" ry="0.7" fill="#a8a468" opacity="0.83" transform="rotate(106 40.5 48.3)"/><ellipse cx="15.4" cy="42.4" rx="2.5" ry="0.8" fill="#a8a468" opacity="0.64" transform="rotate(153 15.4 42.4)"/><ellipse cx="57.9" cy="53.2" rx="2.5" ry="0.6" fill="#b4aa64" opacity="0.63" transform="rotate(68 57.9 53.2)"/><ellipse cx="93.2" cy="34.9" rx="2.9" ry="0.7" fill="#c8bc84" opacity="0.52" transform="rotate(11 93.2 34.9)"/><ellipse cx="46.1" cy="28.0" rx="0.9" ry="0.8" fill="#b8c4dc" opacity="0.69" transform="rotate(114 46.1 28.0)"/><ellipse cx="48.1" cy="18.0" rx="1.3" ry="0.9" fill="#8ca4d0" opacity="0.74" transform="rotate(-82 48.1 18.0)"/><ellipse cx="14.4" cy="4.0" rx="2.8" ry="0.8" fill="#9c9c70" opacity="0.53" transform="rotate(-146 14.4 4.0)"/><ellipse cx="89.8" cy="34.1" rx="2.8" ry="0.8" fill="#8c98a8" opacity="0.54" transform="rotate(11 89.8 34.1)"/><ellipse cx="50.4" cy="31.5" rx="1.2" ry="0.9" fill="#c8d0e0" opacity="0.76" transform="rotate(58 50.4 31.5)"/><ellipse cx="12.0" cy="54.4" rx="3.1" ry="0.7" fill="#a8a468" opacity="0.6" transform="rotate(141 12.0 54.4)"/><ellipse cx="35.9" cy="50.5" rx="2.4" ry="0.5" fill="#a8a468" opacity="0.73" transform="rotate(114 35.9 50.5)"/><ellipse cx="-1.4" cy="6.5" rx="3.3" ry="0.5" fill="#8ca4d0" opacity="0.55" transform="rotate(-158 -1.4 6.5)"/><ellipse cx="78.2" cy="12.9" rx="2.4" ry="0.7" fill="#9cb0d8" opacity="0.9" transform="rotate(-23 78.2 12.9)"/><ellipse cx="36.8" cy="14.0" rx="1.7" ry="0.5" fill="#9c9c70" opacity="0.76" transform="rotate(-130 36.8 14.0)"/><ellipse cx="51.4" cy="39.6" rx="1.6" ry="0.6" fill="#b4aa64" opacity="0.5" transform="rotate(72 51.4 39.6)"/><ellipse cx="61.7" cy="12.4" rx="1.8" ry="0.5" fill="#9cb0d8" opacity="0.79" transform="rotate(-43 61.7 12.4)"/><ellipse cx="50.7" cy="32.7" rx="1.2" ry="0.8" fill="#b8c4dc" opacity="0.53" transform="rotate(61 50.7 32.7)"/><ellipse cx="14.4" cy="0.4" rx="2.9" ry="0.9" fill="#d8d8d0" opacity="0.52" transform="rotate(-142 14.4 0.4)"/><ellipse cx="57.6" cy="27.6" rx="1.3" ry="0.5" fill="#8ca4d0" opacity="0.62" transform="rotate(9 57.6 27.6)"/><ellipse cx="44.5" cy="11.3" rx="1.7" ry="0.7" fill="#c8bc84" opacity="0.63" transform="rotate(-100 44.5 11.3)"/><ellipse cx="92.5" cy="14.6" rx="3.0" ry="0.5" fill="#b8c4dc" opacity="0.82" transform="rotate(-14 92.5 14.6)"/><ellipse cx="17.9" cy="51.3" rx="2.8" ry="0.8" fill="#8c98a8" opacity="0.69" transform="rotate(139 17.9 51.3)"/><ellipse cx="53.3" cy="-0.6" rx="2.4" ry="0.6" fill="#8ca4d0" opacity="0.61" transform="rotate(-77 53.3 -0.6)"/><ellipse cx="14.7" cy="2.7" rx="2.8" ry="0.6" fill="#9c9c70" opacity="0.74" transform="rotate(-144 14.7 2.7)"/><ellipse cx="23.9" cy="13.2" rx="2.1" ry="0.6" fill="#b8c4dc" opacity="0.77" transform="rotate(-151 23.9 13.2)"/><ellipse cx="3.4" cy="1.7" rx="3.2" ry="0.8" fill="#a8a468" opacity="0.63" transform="rotate(-151 3.4 1.7)"/><ellipse cx="44.8" cy="40.2" rx="1.7" ry="0.6" fill="#b4aa64" opacity="0.56" transform="rotate(99 44.8 40.2)"/><ellipse cx="91.6" cy="-1.5" rx="3.4" ry="0.8" fill="#8ca4d0" opacity="0.87" transform="rotate(-32 91.6 -1.5)"/><ellipse cx="39.4" cy="34.1" rx="1.4" ry="0.7" fill="#8ca4d0" opacity="0.65" transform="rotate(133 39.4 34.1)"/><ellipse cx="75.5" cy="23.6" rx="2.1" ry="0.7" fill="#9cb0d8" opacity="0.58" transform="rotate(-5 75.5 23.6)"/><ellipse cx="56.4" cy="-0.4" rx="2.4" ry="0.8" fill="#d8d8d0" opacity="0.59" transform="rotate(-70 56.4 -0.4)"/><ellipse cx="-0.7" cy="6.5" rx="3.2" ry="0.6" fill="#9c9c70" opacity="0.7" transform="rotate(-158 -0.7 6.5)"/><ellipse cx="53.8" cy="42.4" rx="1.8" ry="0.5" fill="#b4aa64" opacity="0.78" transform="rotate(67 53.8 42.4)"/><ellipse cx="20.2" cy="49.4" rx="2.7" ry="0.8" fill="#c8bc84" opacity="0.84" transform="rotate(139 20.2 49.4)"/><ellipse cx="21.7" cy="45.8" rx="2.4" ry="0.5" fill="#b4aa64" opacity="0.74" transform="rotate(142 21.7 45.8)"/><ellipse cx="25.0" cy="50.3" rx="2.6" ry="0.5" fill="#b4aa64" opacity="0.58" transform="rotate(132 25.0 50.3)"/><ellipse cx="75.3" cy="3.6" rx="2.7" ry="0.6" fill="#c0b470" opacity="0.81" transform="rotate(-38 75.3 3.6)"/><ellipse cx="71.8" cy="21.7" rx="1.9" ry="0.9" fill="#b8c4dc" opacity="0.65" transform="rotate(-10 71.8 21.7)"/><ellipse cx="54.6" cy="27.0" rx="1.1" ry="0.8" fill="#d8d8d0" opacity="0.68" transform="rotate(7 54.6 27.0)"/><ellipse cx="86.2" cy="38.5" rx="2.7" ry="0.9" fill="#c8bc84" opacity="0.78" transform="rotate(18 86.2 38.5)"/><ellipse cx="71.7" cy="37.7" rx="2.1" ry="0.7" fill="#c0b470" opacity="0.88" transform="rotate(25 71.7 37.7)"/><ellipse cx="31.0" cy="4.3" rx="2.3" ry="0.6" fill="#b8c4dc" opacity="0.59" transform="rotate(-126 31.0 4.3)"/><ellipse cx="43.3" cy="11.1" rx="1.7" ry="0.5" fill="#a8a468" opacity="0.72" transform="rotate(-104 43.3 11.1)"/><ellipse cx="45.1" cy="55.1" rx="2.5" ry="0.7" fill="#8c98a8" opacity="0.89" transform="rotate(94 45.1 55.1)"/><ellipse cx="64.1" cy="30.7" rx="1.6" ry="0.9" fill="#b4aa64" opacity="0.77" transform="rotate(15 64.1 30.7)"/><ellipse cx="47.7" cy="14.7" rx="1.5" ry="0.6" fill="#d8d8d0" opacity="0.65" transform="rotate(-86 47.7 14.7)"/><ellipse cx="21.2" cy="44.3" rx="2.4" ry="0.9" fill="#c0b470" opacity="0.86" transform="rotate(145 21.2 44.3)"/><ellipse cx="52.8" cy="12.3" rx="1.7" ry="0.9" fill="#b4aa64" opacity="0.85" transform="rotate(-67 52.8 12.3)"/><ellipse cx="60.6" cy="17.4" rx="1.6" ry="0.9" fill="#c8d0e0" opacity="0.65" transform="rotate(-32 60.6 17.4)"/><ellipse cx="59.2" cy="27.3" rx="1.4" ry="0.6" fill="#d8d8d0" opacity="0.59" transform="rotate(6 59.2 27.3)"/><ellipse cx="70.7" cy="41.8" rx="2.2" ry="0.5" fill="#a8a468" opacity="0.52" transform="rotate(34 70.7 41.8)"/><ellipse cx="43.5" cy="51.4" rx="2.3" ry="0.5" fill="#c0b470" opacity="0.73" transform="rotate(98 43.5 51.4)"/><ellipse cx="46.0" cy="37.5" rx="1.5" ry="0.9" fill="#c8bc84" opacity="0.55" transform="rotate(95 46.0 37.5)"/><ellipse cx="57.3" cy="25.0" rx="1.3" ry="0.7" fill="#b8c4dc" opacity="0.83" transform="rotate(-6 57.3 25.0)"/><ellipse cx="82.9" cy="51.0" rx="3.0" ry="0.6" fill="#a8a468" opacity="0.6" transform="rotate(35 82.9 51.0)"/><ellipse cx="48.7" cy="44.3" rx="1.9" ry="0.6" fill="#c8bc84" opacity="0.86" transform="rotate(85 48.7 44.3)"/><ellipse cx="91.8" cy="38.7" rx="3.0" ry="0.5" fill="#a8a468" opacity="0.76" transform="rotate(16 91.8 38.7)"/><ellipse cx="10.9" cy="36.3" rx="2.5" ry="0.5" fill="#9c9c70" opacity="0.5" transform="rotate(164 10.9 36.3)"/><ellipse cx="66.5" cy="0.3" rx="2.6" ry="0.5" fill="#9cb0d8" opacity="0.66" transform="rotate(-53 66.5 0.3)"/><ellipse cx="43.5" cy="41.4" rx="1.7" ry="0.7" fill="#c0b470" opacity="0.59" transform="rotate(103 43.5 41.4)"/><ellipse cx="66.2" cy="54.6" rx="2.7" ry="0.9" fill="#b4aa64" opacity="0.79" transform="rotate(56 66.2 54.6)"/><ellipse cx="48.4" cy="10.7" rx="1.7" ry="0.7" fill="#b8c4dc" opacity="0.58" transform="rotate(-85 48.4 10.7)"/><ellipse cx="91.1" cy="40.5" rx="3.0" ry="0.8" fill="#c8bc84" opacity="0.87" transform="rotate(18 91.1 40.5)"/><ellipse cx="16.4" cy="23.3" rx="2.2" ry="0.5" fill="#9cb0d8" opacity="0.66" transform="rotate(-175 16.4 23.3)"/><ellipse cx="48.4" cy="13.1" rx="1.6" ry="0.5" fill="#c0b470" opacity="0.83" transform="rotate(-84 48.4 13.1)"/><ellipse cx="33.9" cy="36.9" rx="1.7" ry="0.7" fill="#a8a468" opacity="0.84" transform="rotate(140 33.9 36.9)"/><ellipse cx="58.7" cy="24.3" rx="1.3" ry="0.8" fill="#d8d8d0" opacity="0.83" transform="rotate(-8 58.7 24.3)"/><ellipse cx="66.5" cy="9.5" rx="2.1" ry="0.7" fill="#c8bc84" opacity="0.86" transform="rotate(-40 66.5 9.5)"/><ellipse cx="43.1" cy="37.0" rx="1.5" ry="0.7" fill="#8c98a8" opacity="0.71" transform="rotate(110 43.1 37.0)"/><ellipse cx="7.8" cy="20.3" rx="2.6" ry="0.6" fill="#c8d0e0" opacity="0.57" transform="rotate(-172 7.8 20.3)"/><ellipse cx="67.2" cy="37.4" rx="1.9" ry="0.5" fill="#b4aa64" opacity="0.87" transform="rotate(29 67.2 37.4)"/><ellipse cx="45.2" cy="6.6" rx="2.0" ry="0.7" fill="#8c98a8" opacity="0.71" transform="rotate(-95 45.2 6.6)"/><ellipse cx="42.7" cy="15.4" rx="1.5" ry="0.5" fill="#8c98a8" opacity="0.61" transform="rotate(-112 42.7 15.4)"/><ellipse cx="5.9" cy="32.9" rx="2.7" ry="0.5" fill="#a8a468" opacity="0.55" transform="rotate(170 5.9 32.9)"/><ellipse cx="77.0" cy="6.0" rx="2.6" ry="0.5" fill="#b8c4dc" opacity="0.73" transform="rotate(-34 77.0 6.0)"/><ellipse cx="46.6" cy="11.3" rx="1.7" ry="0.6" fill="#8c98a8" opacity="0.67" transform="rotate(-92 46.6 11.3)"/><ellipse cx="68.1" cy="1.0" rx="2.6" ry="0.8" fill="#c8d0e0" opacity="0.64" transform="rotate(-50 68.1 1.0)"/><ellipse cx="48.8" cy="48.5" rx="2.2" ry="0.8" fill="#c8bc84" opacity="0.73" transform="rotate(85 48.8 48.5)"/><ellipse cx="76.2" cy="24.0" rx="2.1" ry="0.8" fill="#c8bc84" opacity="0.52" transform="rotate(-4 76.2 24.0)"/><ellipse cx="70.1" cy="18.4" rx="1.9" ry="0.6" fill="#c8d0e0" opacity="0.71" transform="rotate(-18 70.1 18.4)"/><ellipse cx="78.8" cy="37.1" rx="2.4" ry="0.8" fill="#9c9c70" opacity="0.59" transform="rotate(19 78.8 37.1)"/><ellipse cx="17.7" cy="37.9" rx="2.3" ry="0.7" fill="#c8bc84" opacity="0.82" transform="rotate(158 17.7 37.9)"/><ellipse cx="87.3" cy="-0.8" rx="3.2" ry="0.6" fill="#8ca4d0" opacity="0.77" transform="rotate(-34 87.3 -0.8)"/><ellipse cx="41.1" cy="55.8" rx="2.6" ry="0.7" fill="#b4aa64" opacity="0.6" transform="rotate(101 41.1 55.8)"/><ellipse cx="12.2" cy="22.6" rx="2.4" ry="0.5" fill="#a8a468" opacity="0.64" transform="rotate(-175 12.2 22.6)"/><ellipse cx="52.4" cy="33.0" rx="1.3" ry="0.9" fill="#8ca4d0" opacity="0.53" transform="rotate(53 52.4 33.0)"/><ellipse cx="0.1" cy="3.6" rx="3.3" ry="0.5" fill="#8ca4d0" opacity="0.62" transform="rotate(-154 0.1 3.6)"/><ellipse cx="24.1" cy="37.4" rx="2.0" ry="0.8" fill="#c0b470" opacity="0.8" transform="rotate(153 24.1 37.4)"/><ellipse cx="38.6" cy="52.4" rx="2.4" ry="0.7" fill="#8c98a8" opacity="0.76" transform="rotate(108 38.6 52.4)"/><ellipse cx="7.8" cy="33.4" rx="2.6" ry="0.7" fill="#9c9c70" opacity="0.83" transform="rotate(169 7.8 33.4)"/><ellipse cx="76.5" cy="30.4" rx="2.2" ry="0.7" fill="#c0b470" opacity="0.65" transform="rotate(8 76.5 30.4)"/><ellipse cx="43.5" cy="24.4" rx="1.0" ry="0.5" fill="#d8d8d0" opacity="0.88" transform="rotate(-156 43.5 24.4)"/><ellipse cx="33.7" cy="45.8" rx="2.1" ry="0.6" fill="#a8a468" opacity="0.9" transform="rotate(124 33.7 45.8)"/><ellipse cx="53.2" cy="33.2" rx="1.3" ry="0.6" fill="#d8d8d0" opacity="0.52" transform="rotate(49 53.2 33.2)"/><ellipse cx="20.0" cy="43.2" rx="2.4" ry="0.8" fill="#8c98a8" opacity="0.71" transform="rotate(147 20.0 43.2)"/><ellipse cx="92.8" cy="23.7" rx="2.9" ry="0.6" fill="#c8bc84" opacity="0.64" transform="rotate(-3 92.8 23.7)"/><ellipse cx="-1.1" cy="22.0" rx="3.0" ry="0.6" fill="#c8bc84" opacity="0.75" transform="rotate(-175 -1.1 22.0)"/><ellipse cx="15.3" cy="0.0" rx="2.9" ry="0.5" fill="#c8d0e0" opacity="0.81" transform="rotate(-141 15.3 0.0)"/><ellipse cx="14.2" cy="11.3" rx="2.5" ry="0.5" fill="#9c9c70" opacity="0.84" transform="rotate(-156 14.2 11.3)"/><ellipse cx="87.4" cy="51.4" rx="3.2" ry="0.7" fill="#8c98a8" opacity="0.79" transform="rotate(32 87.4 51.4)"/><ellipse cx="38.2" cy="49.9" rx="2.3" ry="0.7" fill="#9c9c70" opacity="0.76" transform="rotate(110 38.2 49.9)"/><ellipse cx="95.6" cy="27.5" rx="3.0" ry="0.6" fill="#c8bc84" opacity="0.62" transform="rotate(2 95.6 27.5)"/><ellipse cx="17.3" cy="35.5" rx="2.3" ry="0.5" fill="#c0b470" opacity="0.87" transform="rotate(162 17.3 35.5)"/><ellipse cx="56.8" cy="51.0" rx="2.4" ry="0.5" fill="#b4aa64" opacity="0.6" transform="rotate(69 56.8 51.0)"/><ellipse cx="69.3" cy="13.2" rx="2.1" ry="0.7" fill="#d8d8d0" opacity="0.9" transform="rotate(-30 69.3 13.2)"/><ellipse cx="8.2" cy="22.8" rx="2.6" ry="0.7" fill="#c8bc84" opacity="0.52" transform="rotate(-175 8.2 22.8)"/><ellipse cx="30.9" cy="1.8" rx="2.4" ry="0.7" fill="#c8d0e0" opacity="0.54" transform="rotate(-124 30.9 1.8)"/><ellipse cx="23.4" cy="43.8" rx="2.3" ry="0.9" fill="#9c9c70" opacity="0.56" transform="rotate(143 23.4 43.8)"/><ellipse cx="60.1" cy="50.0" rx="2.4" ry="0.6" fill="#c8bc84" opacity="0.75" transform="rotate(61 60.1 50.0)"/><ellipse cx="77.5" cy="25.4" rx="2.2" ry="0.8" fill="#9c9c70" opacity="0.54" transform="rotate(-1 77.5 25.4)"/><ellipse cx="26.3" cy="44.1" rx="2.2" ry="0.8" fill="#b4aa64" opacity="0.71" transform="rotate(139 26.3 44.1)"/><ellipse cx="88.7" cy="52.0" rx="3.2" ry="0.6" fill="#8c98a8" opacity="0.87" transform="rotate(32 88.7 52.0)"/><ellipse cx="20.3" cy="4.3" rx="2.6" ry="0.7" fill="#c0b470" opacity="0.58" transform="rotate(-141 20.3 4.3)"/><ellipse cx="22.2" cy="11.9" rx="2.2" ry="0.8" fill="#8c98a8" opacity="0.78" transform="rotate(-150 22.2 11.9)"/><ellipse cx="48.7" cy="26.1" rx="0.9" ry="0.5" fill="#8ca4d0" opacity="0.62" transform="rotate(3 48.7 26.1)"/><ellipse cx="70.0" cy="-0.4" rx="2.7" ry="0.5" fill="#c0b470" opacity="0.81" transform="rotate(-49 70.0 -0.4)"/><ellipse cx="-1.7" cy="9.6" rx="3.2" ry="0.9" fill="#9c9c70" opacity="0.73" transform="rotate(-161 -1.7 9.6)"/><ellipse cx="33.1" cy="32.5" rx="1.5" ry="0.7" fill="#c0b470" opacity="0.7" transform="rotate(155 33.1 32.5)"/><ellipse cx="59.2" cy="27.7" rx="1.4" ry="0.7" fill="#8ca4d0" opacity="0.69" transform="rotate(8 59.2 27.7)"/><ellipse cx="1.0" cy="42.1" rx="3.1" ry="0.5" fill="#8c98a8" opacity="0.81" transform="rotate(161 1.0 42.1)"/><ellipse cx="34.9" cy="37.9" rx="1.7" ry="0.7" fill="#a8a468" opacity="0.84" transform="rotate(136 34.9 37.9)"/><ellipse cx="57.5" cy="23.3" rx="1.3" ry="0.7" fill="#b8c4dc" opacity="0.65" transform="rotate(-14 57.5 23.3)"/><ellipse cx="97.9" cy="39.7" rx="3.2" ry="0.8" fill="#9c9c70" opacity="0.52" transform="rotate(15 97.9 39.7)"/><ellipse cx="70.1" cy="32.2" rx="1.9" ry="0.5" fill="#c0b470" opacity="0.87" transform="rotate(15 70.1 32.2)"/><ellipse cx="64.7" cy="8.8" rx="2.1" ry="0.6" fill="#c8bc84" opacity="0.74" transform="rotate(-44 64.7 8.8)"/><ellipse cx="83.9" cy="18.9" rx="2.5" ry="0.8" fill="#c0b470" opacity="0.77" transform="rotate(-11 83.9 18.9)"/><ellipse cx="17.6" cy="13.0" rx="2.3" ry="0.5" fill="#9cb0d8" opacity="0.85" transform="rotate(-156 17.6 13.0)"/><ellipse cx="64.1" cy="33.8" rx="1.7" ry="0.5" fill="#c8bc84" opacity="0.89" transform="rotate(25 64.1 33.8)"/><ellipse cx="36.6" cy="55.8" rx="2.6" ry="0.6" fill="#b4aa64" opacity="0.85" transform="rotate(109 36.6 55.8)"/><ellipse cx="24.0" cy="54.9" rx="2.8" ry="0.6" fill="#b4aa64" opacity="0.87" transform="rotate(129 24.0 54.9)"/><ellipse cx="16.0" cy="17.8" rx="2.3" ry="0.6" fill="#d8d8d0" opacity="0.51" transform="rotate(-165 16.0 17.8)"/></g></svg></div>
<div class="cap" style="left:563.2px;top:187.8px">ColdWarm.jpg<br><i>3,6  MB</i></div>
<div class="th" style="left:695.3px;top:119.4px;width:100.4px;height:63.4px"><svg width="96" height="60" viewBox="0 0 96 60" preserveAspectRatio="none"><defs><filter id="ivf" x="0" y="0" width="100%" height="100%"><feGaussianBlur stdDeviation="0.55"/></filter><filter id="ivf2" x="-20%" y="-20%" width="140%" height="140%"><feGaussianBlur stdDeviation="1.3"/></filter></defs><rect x="0" y="0" width="96" height="60" fill="#0b0506"/><g filter="url(#ivf)"><polygon points="1,2 18,0 15,9 10,16 4,10" fill="#2a2222"/><polygon points="12,2 26,1 28,7 20,12 12,18 14,9" fill="#4e4545"/><polygon points="20,12 28,4 42,6 36,14 28,18 21.5,27 22,18" fill="#645b59"/><polygon points="34,4 52,1 50,12 46,24 43,16 36,14" fill="#5c5352"/><polygon points="53,2 66,0 60,8 53,15" fill="#5e5554"/><polygon points="68,0 86,2 82,8 78,13 74,7" fill="#3a3131"/><polygon points="86,2 96,3 96,12 90,9" fill="#2c2424"/><polygon points="50,16 60,13 66,20 70,28 60,32 52,38 45.5,45 45,32" fill="#352c2c"/><polygon points="60,13 72,15 82,17 78,27 70,37 69,28 64,19" fill="#433a3a"/><polygon points="68,36 80,30 78,44 73,57 70,47 66,41" fill="#3c3232"/><polygon points="80,18 92,20 96,24 95,36 90,41 86,30" fill="#261e1e"/><polygon points="90,12 96,14 96,30 93,24" fill="#3e3636"/></g><g filter="url(#ivf2)"><ellipse cx="46" cy="13" rx="2.6" ry="6" fill="#bcb4b4" opacity="0.95" transform="rotate(15 46 13)"/><ellipse cx="30" cy="13" rx="5" ry="3" fill="#8e8585" opacity="0.75" transform="rotate(-45 30 13)"/><ellipse cx="24" cy="20" rx="2" ry="4" fill="#7a7070" opacity="0.6" transform="rotate(20 24 20)"/><ellipse cx="20" cy="7" rx="3" ry="3.5" fill="#7e7575" opacity="0.6"/><ellipse cx="72" cy="25" rx="2.6" ry="4" fill="#a8a0a0" opacity="0.95" transform="rotate(25 72 25)"/><ellipse cx="53" cy="31" rx="5" ry="4.5" fill="#5e5454" opacity="0.8"/><ellipse cx="49" cy="40" rx="2" ry="4" fill="#4a4040" opacity="0.7" transform="rotate(25 49 40)"/><ellipse cx="73" cy="44" rx="2.6" ry="6" fill="#5a4e4e" opacity="0.8"/><ellipse cx="58" cy="6" rx="2.6" ry="3" fill="#8a8080" opacity="0.7"/><ellipse cx="95" cy="26" rx="1.3" ry="6" fill="#5a5050" opacity="0.8"/><ellipse cx="80" cy="8" rx="3" ry="2" fill="#544a4a" opacity="0.6"/></g></svg></div>
<div class="cap" style="left:695.3px;top:187.8px">Dark_Ivy.jpg<br><i>465,2  kB</i></div>
<div class="th" style="left:827.4px;top:119.3px;width:100.4px;height:63.5px"><svg width="96" height="60" viewBox="0 0 96 60" preserveAspectRatio="none"><defs></defs><rect x="0" y="0" width="96" height="60" fill="#3b373e"/></svg></div>
<div class="cap" style="left:827.4px;top:187.8px">Endless-shapes.jpg<br><i>963,5  kB</i></div>
<div class="th" style="left:960.4px;top:119.4px;width:100.4px;height:63.4px"><svg width="96" height="60" viewBox="0 0 96 60" preserveAspectRatio="none"><defs><linearGradient id="fbg" x1="0" y1="0" x2="1" y2="0.6"><stop offset="0" stop-color="#566c92"/><stop offset="0.5" stop-color="#425a80"/><stop offset="1" stop-color="#627ca2"/></linearGradient><pattern id="fbp" width="4" height="3.6" patternUnits="userSpaceOnUse" patternTransform="rotate(24)"><rect width="4" height="3.6" fill="#6e86aa"/><ellipse cx="2" cy="1.8" rx="1.35" ry="1.15" fill="#2a4068"/></pattern><pattern id="fbp2" width="3.4" height="3.4" patternUnits="userSpaceOnUse" patternTransform="rotate(8)"><rect width="3.4" height="3.4" fill="#748aae"/><circle cx="1.7" cy="1.7" r="0.9" fill="#50688e"/></pattern><filter id="fbf" x="0" y="0" width="100%" height="100%"><feGaussianBlur stdDeviation="0.6"/></filter></defs><g filter="url(#fbf)"><rect x="0" y="0" width="96" height="60" fill="url(#fbg)"/><polygon points="58,0 96,0 96,46 60,29 62,14" fill="url(#fbp2)" opacity="0.85"/><line x1="30" y1="0" x2="34" y2="26" stroke="#3a5480" stroke-width="1.2" opacity="0.5"/><line x1="36" y1="0" x2="40" y2="26" stroke="#3a5480" stroke-width="1.2" opacity="0.5"/><line x1="42" y1="0" x2="46" y2="26" stroke="#3a5480" stroke-width="1.2" opacity="0.5"/><line x1="48" y1="0" x2="52" y2="26" stroke="#3a5480" stroke-width="1.2" opacity="0.5"/><line x1="54" y1="0" x2="58" y2="26" stroke="#3a5480" stroke-width="1.2" opacity="0.5"/><polygon points="22,13 38,18 60,30 78,38 96,46 96,60 45,60 11,40 15,24" fill="url(#fbp)"/><path d="M11.5 40Q12 17 23 13.2L40 18.5L60 29.8L78 37.8L96 45.8" fill="none" stroke="#9cb4d6" stroke-width="1.8"/><polygon points="0,38 11,40 30,50 45,60 0,60" fill="url(#fbp2)"/><polygon points="0,38 11,40 30,50 45,60 0,60" fill="#8ea6c8" opacity="0.35"/></g></svg></div>
<div class="cap" style="left:960.4px;top:187.8px">Fabric.jpg<br><i>815,9  kB</i></div>
<div class="th" style="left:1092.7px;top:119.4px;width:100.4px;height:63.4px"><svg width="96" height="60" viewBox="0 0 96 60" preserveAspectRatio="none"><defs><linearGradient id="icsky" x1="0" y1="0" x2="0" y2="1"><stop offset="0" stop-color="#1c2c54"/><stop offset="0.4" stop-color="#2c4068"/><stop offset="0.55" stop-color="#8c98ac"/><stop offset="1" stop-color="#aab4c4"/></linearGradient><linearGradient id="icgr" x1="0" y1="0" x2="0" y2="1"><stop offset="0" stop-color="#b8a048"/><stop offset="0.3" stop-color="#d0b048"/><stop offset="1" stop-color="#c4a43c"/></linearGradient><filter id="icf"><feGaussianBlur stdDeviation="0.7"/></filter><filter id="icf2"><feGaussianBlur stdDeviation="1.5"/></filter></defs><rect x="0" y="0" width="96" height="40" fill="#aab4c4"/><rect x="0" y="0" width="96" height="22" fill="url(#icsky)"/><g filter="url(#icf2)"><ellipse cx="78" cy="7" rx="22" ry="3" fill="#6a6870" opacity="0.8"/><ellipse cx="86" cy="14" rx="12" ry="1.6" fill="#344468" opacity="0.9"/><ellipse cx="20" cy="12" rx="18" ry="3" fill="#b8bcc8" opacity="0.9"/><ellipse cx="50" cy="16" rx="20" ry="3" fill="#b4b0ac" opacity="0.9"/><ellipse cx="10" cy="18" rx="12" ry="4" fill="#e0e4ea" opacity="1"/><ellipse cx="88" cy="19" rx="8" ry="1.5" fill="#c8c4c0" opacity="0.9"/><ellipse cx="30" cy="5" rx="26" ry="3" fill="#1c2c54" opacity="0.7"/></g><g filter="url(#icf)"><polygon points="0,26 6,20 14,21 22,19 30,17 40,18 50,21 60,27 70,28 80,26 88,22 96,24 96,38 0,38" fill="#e4e8ee"/><polygon points="0,30 8,26 18,28 26,24 34,27 44,31 52,34 60,36 66,37 0,37.5" fill="#363f58"/><polygon points="10,26 18,22 26,20 32,23 26,25 18,28" fill="#5c6a8a" opacity="0.8"/><polygon points="44,26 56,27 66,32 74,31 80,35 96,36 96,38 56,38" fill="#566a98" opacity="0.9"/><polygon points="36,21 44,22 50,27 44,26" fill="#7080a0" opacity="0.8"/><polygon points="76,28 86,24 96,26 96,32 84,33" fill="#e8ecf0"/><polygon points="84,33 96,31 96,37 80,36" fill="#7c8cb0" opacity="0.8"/></g><rect x="0" y="37.3" width="96" height="9.5" fill="#4a8cb2"/><rect x="0" y="37.3" width="96" height="1.2" fill="#3c6a90"/><rect x="0" y="46" width="96" height="14" fill="url(#icgr)"/><g filter="url(#icf)" transform="translate(0,0)"><polygon points="0,44 12,42.5 18,44 30,45 36,46 58,46 58,48 0,48" fill="#8a7c40"/><polygon points="17,44 21,40.5 27,40 30,45 17,46" fill="#242c34"/><polygon points="26,42 29,41.5 31,46 27,46" fill="#9a9484"/><rect x="38" y="43.5" width="6" height="3" fill="#5a5034"/><rect x="42" y="44.5" width="14" height="2.5" fill="#a89c6c"/><rect x="44" y="43" width="12" height="2" fill="#6c6438"/><rect x="57" y="43.3" width="27" height="4.4" fill="#dcdad2"/><polygon points="57,43.5 63,40.3 72,40.3 74,43.5" fill="#964a30"/><polygon points="66,40 84,40 84.5,43.3 73,43.3" fill="#3e5478"/><rect x="73" y="43.3" width="1.5" height="4.4" fill="#8c8474"/></g><g filter="url(#icf2)"><ellipse cx="20" cy="52" rx="14" ry="1.5" fill="#b09438" opacity="0.6"/><ellipse cx="70" cy="56" rx="16" ry="1.5" fill="#b89c3c" opacity="0.6"/><ellipse cx="50" cy="49" rx="20" ry="1" fill="#dcc060" opacity="0.6"/></g></svg></div>
<div class="cap" style="left:1092.7px;top:187.8px">Icescape.jpg<br><i>1,0  MB</i></div>
<div class="th" style="left:298.8px;top:291.5px;width:100.4px;height:57.5px"><svg width="96" height="54" viewBox="0 0 96 54" preserveAspectRatio="none"><defs><linearGradient id="lwb" x1="0" y1="0" x2="1" y2="0"><stop offset="0" stop-color="#0a0438"/><stop offset="0.35" stop-color="#100420"/><stop offset="0.5" stop-color="#280a08"/><stop offset="1" stop-color="#38100c"/></linearGradient><filter id="lwf"><feGaussianBlur stdDeviation="1.2"/></filter><filter id="lwf2"><feGaussianBlur stdDeviation="2.5"/></filter><filter id="lwf3"><feGaussianBlur stdDeviation="0.5"/></filter></defs><rect x="0" y="0" width="96" height="54" fill="url(#lwb)"/><g filter="url(#lwf2)"><polygon points="0,28 40,30 60,40 96,54 0,54" fill="#06032e"/><polygon points="30,0 96,0 96,32 60,24 40,18" fill="#2c0c08"/><ellipse cx="8" cy="6" rx="14" ry="8" fill="#50082a" opacity="0.9" transform="rotate(25 8 6)"/><polygon points="0,8 0,13 46,28 50,26" fill="#1a1670"/><polygon points="0,14 0,27 46,30 46,27" fill="#0a0642"/><polygon points="46,30 96,54 60,54 44,36" fill="#481060"/></g><g filter="url(#lwf)"><polygon points="44,23 52,22 66,26 80,27 96,35 96,46 76,40 60,34 48,28" fill="#ffa820"/><polygon points="60,28 72,29 84,34 70,34" fill="#ffe040"/><polygon points="41,35 45,35 54,54 46,54" fill="#ff6428"/><polygon points="56,27 64,26 70,28 60,30" fill="#e04860" opacity="0.7"/></g><g filter="url(#lwf3)"><polygon points="52,32 60,36 96,52 96,54 92,54" fill="#30b0ff"/><polygon points="60,34 96,48 96,52 64,38" fill="#e8f0ff"/><polygon points="64,34 96,45 96,48 70,38" fill="#60d8ff"/><polygon points="86,46 96,49 96,53 90,51" fill="#d040e8" opacity="0.85"/><polygon points="57,47 60,47 66,54 60,54" fill="#2848ff"/><polygon points="48,28 56,30 62,35 54,33" fill="#c0a0e0" opacity="0.8"/></g></svg></div>
<div class="cap" style="left:298.8px;top:354.0px">LightWaves.png<br><i>4,0  MB</i></div>
<div class="th" style="left:431.0px;top:285.4px;width:100.4px;height:63.6px"><svg width="96" height="60" viewBox="0 0 96 60" preserveAspectRatio="none"><defs><linearGradient id="rds" x1="0" y1="0" x2="0" y2="1"><stop offset="0" stop-color="#052044"/><stop offset="0.5" stop-color="#10488a"/><stop offset="0.86" stop-color="#3c74b4"/><stop offset="1" stop-color="#90a8cc"/></linearGradient><radialGradient id="rdv" cx="0.35" cy="0.9" r="0.9"><stop offset="0.5" stop-color="#000" stop-opacity="0"/><stop offset="1" stop-color="#00102c" stop-opacity="0.55"/></radialGradient><linearGradient id="rdg" x1="0" y1="0" x2="1" y2="0"><stop offset="0" stop-color="#7c5c34"/><stop offset="0.5" stop-color="#b08c4c"/><stop offset="1" stop-color="#b89450"/></linearGradient><filter id="rdf"><feGaussianBlur stdDeviation="0.9"/></filter><filter id="rdf2"><feGaussianBlur stdDeviation="0.5"/></filter></defs><rect x="0" y="0" width="96" height="42.5" fill="url(#rds)"/><rect x="0" y="0" width="96" height="42.5" fill="url(#rdv)"/><g filter="url(#rdf)"><ellipse cx="38" cy="9" rx="16" ry="5.5" fill="#f4e8e8"/><ellipse cx="44" cy="16" rx="11" ry="3.5" fill="#f0e4e4"/><ellipse cx="13" cy="13" rx="7" ry="3.2" fill="#f0e4e4"/><ellipse cx="24" cy="17" rx="8" ry="2.2" fill="#e8dcdc"/><ellipse cx="46" cy="6" rx="8" ry="3" fill="#fff4f4"/></g><g filter="url(#rdf2)"><ellipse cx="35" cy="27" rx="5.5" ry="1.4" fill="#e4dce4" opacity="0.95"/><ellipse cx="30" cy="30.5" rx="4" ry="1.1" fill="#e4dce4" opacity="0.95"/><ellipse cx="33.5" cy="33.5" rx="2" ry="0.9" fill="#e4dce4" opacity="0.95"/><ellipse cx="48" cy="26" rx="2.6" ry="1.1" fill="#e4dce4" opacity="0.95"/><ellipse cx="62" cy="30.5" rx="4" ry="1" fill="#e4dce4" opacity="0.95"/><ellipse cx="64" cy="33.5" rx="3" ry="1" fill="#e4dce4" opacity="0.95"/><ellipse cx="71" cy="34" rx="1.8" ry="1.1" fill="#e4dce4" opacity="0.95"/><ellipse cx="78" cy="34.5" rx="3" ry="0.9" fill="#e4dce4" opacity="0.95"/><ellipse cx="95" cy="21" rx="3.5" ry="1.6" fill="#e4dce4" opacity="0.95"/><ellipse cx="16" cy="5" rx="2" ry="1.3" fill="#e4dce4" opacity="0.95"/><ellipse cx="2.5" cy="30.5" rx="2.6" ry="0.9" fill="#e4dce4" opacity="0.95"/><ellipse cx="59" cy="27.5" rx="1.4" ry="0.9" fill="#e4dce4" opacity="0.95"/><ellipse cx="24" cy="0.3" rx="2" ry="0.8" fill="#e4dce4" opacity="0.95"/><ellipse cx="12" cy="32" rx="1.5" ry="0.7" fill="#e4dce4" opacity="0.95"/><ellipse cx="14" cy="39.5" rx="13" ry="1.6" fill="#c8c8d8" opacity="0.9"/><ellipse cx="60" cy="39.8" rx="30" ry="1.7" fill="#c4c8d8" opacity="0.9"/><ellipse cx="40" cy="38" rx="6" ry="1.2" fill="#c0c4d8" opacity="0.7"/></g><rect x="0" y="42.5" width="96" height="17.5" fill="url(#rdg)"/><g filter="url(#rdf2)"><rect x="0" y="42.5" width="96" height="1.6" fill="#b48460" opacity="0.9"/><polygon points="0,45 30,44.5 56,44 40,46 28,49 10,52 0,53" fill="#4c3820" opacity="0.9"/><polygon points="0,53 20,50 40,51 30,57 0,60" fill="#5c4426" opacity="0.8"/><polygon points="0,47 24,46 28,48 0,50" fill="#a07c50" opacity="0.7"/><path d="M64 44.5Q50 49 56 54T82 60" fill="none" stroke="#6a4830" stroke-width="1.8"/><ellipse cx="80" cy="52" rx="8" ry="1.5" fill="#8c7040" opacity="0.7"/><ellipse cx="72" cy="47" rx="5" ry="1" fill="#8c7444" opacity="0.5"/></g></svg></div>
<div class="cap" style="left:431.0px;top:354.0px">Road.jpg<br><i>724,8  kB</i></div>
<div class="th" style="left:563.2px;top:281.5px;width:100.4px;height:67.5px"><svg width="96" height="64" viewBox="0 0 96 64" preserveAspectRatio="none"><defs><linearGradient id="sks" x1="0" y1="0" x2="0" y2="1"><stop offset="0" stop-color="#f4b484"/><stop offset="0.5" stop-color="#f49860"/><stop offset="1" stop-color="#ee7450"/></linearGradient><radialGradient id="skg" cx="0.63" cy="0.3" r="0.35"><stop offset="0" stop-color="#ffe8b0" stop-opacity="0.9"/><stop offset="1" stop-color="#ffd090" stop-opacity="0"/></radialGradient><linearGradient id="skw" x1="0" y1="0" x2="0" y2="1"><stop offset="0" stop-color="#687084"/><stop offset="0.3" stop-color="#4a5268"/><stop offset="1" stop-color="#20242e"/></linearGradient><filter id="skf"><feGaussianBlur stdDeviation="1.1"/></filter><filter id="skf2"><feGaussianBlur stdDeviation="0.5"/></filter></defs><rect x="0" y="0" width="96" height="32" fill="url(#sks)"/><rect x="0" y="0" width="96" height="32" fill="url(#skg)"/><g filter="url(#skf)"><ellipse cx="40" cy="5" rx="30" ry="2" fill="#f8c494" opacity="0.7"/><ellipse cx="82" cy="8" rx="16" ry="3" fill="#f6b88c" opacity="0.5"/></g><g filter="url(#skf2)"><ellipse cx="60.7" cy="19.5" rx="2.9" ry="2.9" fill="#fffdf4"/></g><polygon points="0,23 30,25.5 60,28.5 96,29.5 96,64 0,64" fill="url(#skw)"/><g filter="url(#skf)"><ellipse cx="60" cy="28" rx="2" ry="0.8" fill="#ffb050" opacity="0.9"/><ellipse cx="8" cy="33" rx="8" ry="2" fill="#1a1a24" opacity="0.9"/><ellipse cx="22" cy="27" rx="7" ry="1.5" fill="#4a4c60" opacity="0.8"/><ellipse cx="42" cy="39" rx="15" ry="1.8" fill="#2a2630" opacity="0.85"/><ellipse cx="80" cy="41" rx="10" ry="1.4" fill="#1c2030" opacity="0.9"/><ellipse cx="66" cy="30.5" rx="9" ry="1.2" fill="#3c3440" opacity="0.8"/><polygon points="0,44 20,48 44,60 50,64 0,64" fill="#0e0e16" opacity="0.95"/><polygon points="0,39 14,40 40,54 56,64 44,64 20,48 0,44" fill="#6c6874" opacity="0.7"/><ellipse cx="48" cy="34" rx="22" ry="1.4" fill="#8c8088" opacity="0.6"/><ellipse cx="30" cy="36" rx="12" ry="1" fill="#787484" opacity="0.6"/><ellipse cx="70" cy="46" rx="18" ry="1.6" fill="#5c6078" opacity="0.6"/><ellipse cx="60" cy="52" rx="16" ry="1.5" fill="#787484" opacity="0.45"/><ellipse cx="82" cy="58" rx="14" ry="2" fill="#1c2030" opacity="0.7"/><ellipse cx="88" cy="35" rx="8" ry="1.2" fill="#7c8498" opacity="0.6"/><ellipse cx="56" cy="45" rx="10" ry="1.3" fill="#2a2c3c" opacity="0.7"/><ellipse cx="40" cy="30" rx="10" ry="1" fill="#8a8490" opacity="0.5"/></g></svg></div>
<div class="cap" style="left:563.2px;top:354.0px">SeaSunset.jpg<br><i>2,2  MB</i></div>
<div class="th" style="left:695.3px;top:281.2px;width:100.4px;height:67.8px"><svg width="96" height="64" viewBox="0 0 96 64" preserveAspectRatio="none"><defs><filter id="stf" x="0" y="0" width="100%" height="100%"><feGaussianBlur stdDeviation="0.3 0"/></filter></defs><g filter="url(#stf)"><rect x="0" y="0" width="5.8" height="64" fill="#44b40c"/><rect x="5.5" y="0" width="6.7" height="64" fill="#bcd800"/><rect x="11.9" y="0" width="5.8" height="64" fill="#fce800"/><rect x="17.4" y="0" width="6.2" height="64" fill="#f0d400"/><rect x="23.3" y="0" width="6.3" height="64" fill="#e0cc00"/><rect x="29.3" y="0" width="5.7" height="64" fill="#f4d000"/><rect x="34.7" y="0" width="5.8" height="64" fill="#f4bc10"/><rect x="40.2" y="0" width="5.7" height="64" fill="#fca000"/><rect x="45.6" y="0" width="5.3" height="64" fill="#fc4400"/><rect x="50.6" y="0" width="5.3" height="64" fill="#f03820"/><rect x="55.6" y="0" width="5.2" height="64" fill="#d80828"/><rect x="60.5" y="0" width="5.3" height="64" fill="#fc5c5c"/><rect x="65.5" y="0" width="4.7" height="64" fill="#dc1060"/><rect x="69.9" y="0" width="4.8" height="64" fill="#8c2868"/><rect x="74.4" y="0" width="5.1" height="64" fill="#582860"/><rect x="79.2" y="0" width="4.9" height="64" fill="#a888c0"/><rect x="83.8" y="0" width="4.6" height="64" fill="#bcbcd8"/><rect x="88.1" y="0" width="4.3" height="64" fill="#a4d0dc"/><rect x="92.1" y="0" width="4.2" height="64" fill="#0470a8"/></g></svg></div>
<div class="cap" style="left:695.3px;top:354.0px">Stripes.jpg<br><i>1,9  MB</i></div>
<div class="th" style="left:827.4px;top:285.5px;width:100.4px;height:63.5px"><svg width="96" height="60" viewBox="0 0 96 60" preserveAspectRatio="none"><defs></defs><rect x="0" y="0" width="96" height="60" fill="#4a86cf"/></svg></div>
<div class="cap" style="left:827.4px;top:354.0px">Symbolics-1.jpg<br><i>913,0  kB</i></div>
<div class="th" style="left:960.4px;top:285.4px;width:100.4px;height:63.6px"><svg width="96" height="60" viewBox="0 0 96 60" preserveAspectRatio="none"><defs></defs><rect x="0" y="0" width="96" height="60" fill="#585858"/><circle cx="47.9" cy="41.7" r="0.48" fill="#b0b0a6" opacity="0.63"/><circle cx="28.7" cy="18.6" r="0.35" fill="#b0b0a6" opacity="0.76"/><circle cx="41.0" cy="33.8" r="0.70" fill="#b0b0a6" opacity="0.56"/><circle cx="40.0" cy="4.7" r="0.57" fill="#b0b0a6" opacity="0.38"/><circle cx="1.6" cy="23.1" r="0.58" fill="#b0b0a6" opacity="0.34"/><circle cx="36.3" cy="26.0" r="0.65" fill="#b0b0a6" opacity="0.56"/><circle cx="16.4" cy="43.9" r="0.51" fill="#b0b0a6" opacity="0.81"/><circle cx="40.1" cy="16.0" r="0.40" fill="#b0b0a6" opacity="0.42"/><circle cx="55.1" cy="15.2" r="0.57" fill="#b0b0a6" opacity="0.47"/><circle cx="15.9" cy="24.2" r="0.47" fill="#b0b0a6" opacity="0.62"/><circle cx="26.1" cy="14.4" r="0.65" fill="#b0b0a6" opacity="0.83"/><circle cx="51.6" cy="7.1" r="0.60" fill="#b0b0a6" opacity="0.42"/><circle cx="39.7" cy="1.9" r="0.45" fill="#b0b0a6" opacity="0.33"/><circle cx="74.1" cy="32.6" r="0.49" fill="#b0b0a6" opacity="0.38"/><circle cx="39.9" cy="49.7" r="0.66" fill="#b0b0a6" opacity="0.32"/><circle cx="29.8" cy="19.5" r="0.60" fill="#b0b0a6" opacity="0.48"/><circle cx="36.0" cy="28.4" r="0.56" fill="#b0b0a6" opacity="0.32"/><circle cx="50.4" cy="36.5" r="0.56" fill="#b0b0a6" opacity="0.39"/><circle cx="79.1" cy="24.7" r="0.46" fill="#b0b0a6" opacity="0.83"/><circle cx="46.8" cy="10.2" r="0.51" fill="#b0b0a6" opacity="0.59"/><circle cx="10.9" cy="7.6" r="0.55" fill="#b0b0a6" opacity="0.64"/><circle cx="54.7" cy="11.7" r="0.50" fill="#b0b0a6" opacity="0.70"/><circle cx="44.1" cy="35.3" r="0.69" fill="#b0b0a6" opacity="0.59"/><circle cx="32.7" cy="21.7" r="0.50" fill="#b0b0a6" opacity="0.62"/><circle cx="64.8" cy="20.7" r="0.57" fill="#b0b0a6" opacity="0.33"/><circle cx="14.0" cy="11.5" r="0.59" fill="#b0b0a6" opacity="0.49"/><circle cx="43.4" cy="21.7" r="0.59" fill="#b0b0a6" opacity="0.83"/><circle cx="44.7" cy="39.7" r="0.56" fill="#b0b0a6" opacity="0.48"/><circle cx="29.9" cy="34.2" r="0.48" fill="#b0b0a6" opacity="0.63"/><circle cx="37.3" cy="37.7" r="0.62" fill="#b0b0a6" opacity="0.31"/><circle cx="36.1" cy="33.3" r="0.63" fill="#b0b0a6" opacity="0.43"/><circle cx="52.1" cy="36.6" r="0.59" fill="#b0b0a6" opacity="0.36"/><circle cx="34.6" cy="36.2" r="0.64" fill="#b0b0a6" opacity="0.54"/><circle cx="39.7" cy="13.2" r="0.47" fill="#b0b0a6" opacity="0.66"/><circle cx="46.6" cy="7.9" r="0.43" fill="#b0b0a6" opacity="0.37"/><circle cx="22.2" cy="22.0" r="0.63" fill="#b0b0a6" opacity="0.76"/><circle cx="48.5" cy="32.8" r="0.63" fill="#b0b0a6" opacity="0.65"/><circle cx="35.5" cy="7.2" r="0.40" fill="#b0b0a6" opacity="0.46"/><circle cx="34.2" cy="9.1" r="0.47" fill="#b0b0a6" opacity="0.53"/><circle cx="22.0" cy="32.6" r="0.67" fill="#b0b0a6" opacity="0.39"/><circle cx="84.5" cy="15.9" r="0.66" fill="#b0b0a6" opacity="0.84"/><circle cx="46.2" cy="15.1" r="0.61" fill="#b0b0a6" opacity="0.76"/><circle cx="15.2" cy="7.4" r="0.45" fill="#b0b0a6" opacity="0.49"/><circle cx="40.0" cy="27.8" r="0.56" fill="#b0b0a6" opacity="0.46"/><circle cx="36.0" cy="17.1" r="0.67" fill="#b0b0a6" opacity="0.68"/><circle cx="51.0" cy="6.5" r="0.35" fill="#b0b0a6" opacity="0.71"/><circle cx="49.9" cy="32.7" r="0.58" fill="#b0b0a6" opacity="0.59"/><circle cx="5.2" cy="47.6" r="0.56" fill="#b0b0a6" opacity="0.49"/><circle cx="51.3" cy="53.9" r="0.52" fill="#b0b0a6" opacity="0.73"/><circle cx="32.3" cy="31.7" r="0.54" fill="#b0b0a6" opacity="0.75"/><circle cx="65.3" cy="44.4" r="0.67" fill="#b0b0a6" opacity="0.74"/><circle cx="36.2" cy="20.1" r="0.57" fill="#b0b0a6" opacity="0.77"/><circle cx="53.1" cy="23.7" r="0.44" fill="#b0b0a6" opacity="0.59"/><circle cx="20.2" cy="33.4" r="0.62" fill="#b0b0a6" opacity="0.30"/><circle cx="47.2" cy="23.3" r="0.39" fill="#b0b0a6" opacity="0.34"/><circle cx="72.3" cy="11.2" r="0.38" fill="#b0b0a6" opacity="0.58"/><circle cx="35.4" cy="35.8" r="0.47" fill="#b0b0a6" opacity="0.66"/><circle cx="15.9" cy="16.6" r="0.42" fill="#b0b0a6" opacity="0.48"/><circle cx="61.3" cy="33.6" r="0.60" fill="#b0b0a6" opacity="0.51"/><circle cx="49.4" cy="25.2" r="0.48" fill="#b0b0a6" opacity="0.63"/><circle cx="32.3" cy="6.1" r="0.63" fill="#b0b0a6" opacity="0.64"/><circle cx="21.7" cy="31.1" r="0.52" fill="#b0b0a6" opacity="0.69"/><circle cx="14.9" cy="37.8" r="0.51" fill="#b0b0a6" opacity="0.43"/><circle cx="3.2" cy="21.0" r="0.38" fill="#b0b0a6" opacity="0.53"/><circle cx="6.6" cy="42.3" r="0.68" fill="#b0b0a6" opacity="0.51"/><circle cx="43.2" cy="40.1" r="0.39" fill="#b0b0a6" opacity="0.75"/><circle cx="23.1" cy="1.9" r="0.39" fill="#b0b0a6" opacity="0.62"/><circle cx="47.3" cy="20.6" r="0.62" fill="#b0b0a6" opacity="0.32"/><circle cx="45.7" cy="24.8" r="0.66" fill="#b0b0a6" opacity="0.40"/><circle cx="76.2" cy="20.8" r="0.39" fill="#b0b0a6" opacity="0.76"/><circle cx="58.0" cy="12.0" r="0.63" fill="#b0b0a6" opacity="0.32"/><circle cx="29.1" cy="2.6" r="0.60" fill="#b0b0a6" opacity="0.36"/><circle cx="55.1" cy="24.8" r="0.55" fill="#b0b0a6" opacity="0.76"/><circle cx="41.7" cy="32.0" r="0.44" fill="#b0b0a6" opacity="0.64"/><circle cx="28.4" cy="5.9" r="0.48" fill="#b0b0a6" opacity="0.52"/><circle cx="30.5" cy="37.3" r="0.38" fill="#b0b0a6" opacity="0.58"/><circle cx="55.0" cy="16.2" r="0.61" fill="#b0b0a6" opacity="0.39"/><circle cx="16.3" cy="6.5" r="0.52" fill="#b0b0a6" opacity="0.65"/><circle cx="42.4" cy="15.2" r="0.38" fill="#b0b0a6" opacity="0.71"/><circle cx="52.1" cy="9.2" r="0.51" fill="#b0b0a6" opacity="0.70"/><circle cx="48.0" cy="32.7" r="0.42" fill="#b0b0a6" opacity="0.62"/><circle cx="35.6" cy="33.5" r="0.59" fill="#b0b0a6" opacity="0.82"/><circle cx="39.1" cy="47.3" r="0.49" fill="#b0b0a6" opacity="0.77"/><circle cx="19.2" cy="17.6" r="0.43" fill="#b0b0a6" opacity="0.31"/><circle cx="17.5" cy="26.9" r="0.41" fill="#b0b0a6" opacity="0.50"/><circle cx="33.3" cy="49.1" r="0.40" fill="#b0b0a6" opacity="0.85"/><circle cx="10.6" cy="28.8" r="0.51" fill="#b0b0a6" opacity="0.76"/><circle cx="37.9" cy="1.9" r="0.52" fill="#b0b0a6" opacity="0.70"/><circle cx="42.2" cy="7.4" r="0.61" fill="#b0b0a6" opacity="0.83"/><circle cx="23.0" cy="26.5" r="0.43" fill="#b0b0a6" opacity="0.69"/><circle cx="40.3" cy="11.2" r="0.42" fill="#b0b0a6" opacity="0.44"/><circle cx="59.5" cy="43.3" r="0.65" fill="#b0b0a6" opacity="0.79"/><circle cx="50.7" cy="54.2" r="0.46" fill="#b0b0a6" opacity="0.53"/><circle cx="31.5" cy="15.4" r="0.38" fill="#b0b0a6" opacity="0.76"/><circle cx="38.4" cy="37.2" r="0.55" fill="#b0b0a6" opacity="0.67"/><circle cx="54.4" cy="19.9" r="0.50" fill="#b0b0a6" opacity="0.57"/><circle cx="52.9" cy="41.6" r="0.68" fill="#b0b0a6" opacity="0.52"/><circle cx="25.2" cy="21.2" r="0.45" fill="#b0b0a6" opacity="0.67"/><circle cx="78.6" cy="38.9" r="0.67" fill="#b0b0a6" opacity="0.35"/><circle cx="51.3" cy="13.7" r="0.62" fill="#b0b0a6" opacity="0.72"/><circle cx="39.0" cy="46.3" r="0.58" fill="#b0b0a6" opacity="0.74"/><circle cx="46.1" cy="49.2" r="0.69" fill="#b0b0a6" opacity="0.67"/><circle cx="25.6" cy="21.7" r="0.52" fill="#b0b0a6" opacity="0.49"/><circle cx="22.4" cy="19.6" r="0.58" fill="#b0b0a6" opacity="0.65"/><circle cx="69.3" cy="49.6" r="0.58" fill="#b0b0a6" opacity="0.37"/><circle cx="44.2" cy="16.8" r="0.47" fill="#b0b0a6" opacity="0.70"/><circle cx="9.3" cy="13.4" r="0.58" fill="#b0b0a6" opacity="0.55"/><circle cx="35.8" cy="31.9" r="0.37" fill="#b0b0a6" opacity="0.69"/><circle cx="26.7" cy="1.9" r="0.61" fill="#b0b0a6" opacity="0.50"/><circle cx="41.9" cy="37.9" r="0.66" fill="#b0b0a6" opacity="0.32"/><circle cx="20.8" cy="23.9" r="0.62" fill="#b0b0a6" opacity="0.49"/><circle cx="32.9" cy="37.6" r="0.54" fill="#b0b0a6" opacity="0.72"/><circle cx="25.0" cy="50.2" r="0.39" fill="#b0b0a6" opacity="0.45"/><circle cx="46.2" cy="25.4" r="0.62" fill="#b0b0a6" opacity="0.70"/><circle cx="45.9" cy="30.7" r="0.50" fill="#b0b0a6" opacity="0.71"/><circle cx="24.1" cy="18.5" r="0.49" fill="#b0b0a6" opacity="0.41"/><circle cx="8.7" cy="22.3" r="0.42" fill="#b0b0a6" opacity="0.44"/><circle cx="35.0" cy="18.0" r="0.63" fill="#b0b0a6" opacity="0.79"/><circle cx="52.2" cy="14.3" r="0.54" fill="#b0b0a6" opacity="0.62"/><circle cx="23.2" cy="10.5" r="0.65" fill="#b0b0a6" opacity="0.57"/><circle cx="2.4" cy="10.6" r="0.35" fill="#b0b0a6" opacity="0.72"/><circle cx="15.8" cy="8.0" r="0.53" fill="#b0b0a6" opacity="0.55"/><circle cx="53.8" cy="39.1" r="0.36" fill="#b0b0a6" opacity="0.58"/><circle cx="15.9" cy="10.2" r="0.55" fill="#b0b0a6" opacity="0.83"/><circle cx="41.7" cy="15.3" r="0.63" fill="#b0b0a6" opacity="0.64"/><circle cx="56.3" cy="24.0" r="0.43" fill="#b0b0a6" opacity="0.34"/><circle cx="32.6" cy="53.7" r="0.59" fill="#b0b0a6" opacity="0.37"/><circle cx="44.6" cy="2.6" r="0.67" fill="#b0b0a6" opacity="0.69"/><circle cx="27.5" cy="7.5" r="0.63" fill="#b0b0a6" opacity="0.81"/><circle cx="43.3" cy="6.8" r="0.61" fill="#b0b0a6" opacity="0.57"/><circle cx="42.1" cy="24.3" r="0.38" fill="#b0b0a6" opacity="0.41"/><circle cx="56.4" cy="36.0" r="0.59" fill="#b0b0a6" opacity="0.60"/><circle cx="15.9" cy="36.7" r="0.46" fill="#b0b0a6" opacity="0.56"/><circle cx="28.8" cy="5.7" r="0.41" fill="#b0b0a6" opacity="0.79"/><circle cx="24.9" cy="7.5" r="0.48" fill="#b0b0a6" opacity="0.59"/><circle cx="21.1" cy="17.3" r="0.35" fill="#b0b0a6" opacity="0.41"/><circle cx="33.9" cy="12.9" r="0.51" fill="#b0b0a6" opacity="0.41"/><circle cx="43.8" cy="31.0" r="0.49" fill="#b0b0a6" opacity="0.39"/><circle cx="46.2" cy="21.9" r="0.41" fill="#b0b0a6" opacity="0.57"/><circle cx="40.6" cy="22.7" r="0.51" fill="#b0b0a6" opacity="0.52"/><circle cx="31.7" cy="17.3" r="0.49" fill="#b0b0a6" opacity="0.52"/><circle cx="90.6" cy="21.2" r="0.43" fill="#b0b0a6" opacity="0.35"/><circle cx="24.9" cy="25.3" r="0.57" fill="#b0b0a6" opacity="0.49"/><circle cx="42.5" cy="25.0" r="0.60" fill="#b0b0a6" opacity="0.45"/><circle cx="32.6" cy="3.8" r="0.68" fill="#b0b0a6" opacity="0.47"/><circle cx="42.3" cy="34.6" r="0.64" fill="#b0b0a6" opacity="0.65"/><circle cx="34.0" cy="28.6" r="0.59" fill="#b0b0a6" opacity="0.83"/><circle cx="34.2" cy="21.5" r="0.36" fill="#b0b0a6" opacity="0.35"/><circle cx="40.5" cy="25.4" r="0.37" fill="#b0b0a6" opacity="0.66"/><circle cx="43.7" cy="14.1" r="0.69" fill="#b0b0a6" opacity="0.56"/><circle cx="40.1" cy="19.7" r="0.46" fill="#b0b0a6" opacity="0.63"/><circle cx="43.0" cy="18.5" r="0.45" fill="#b0b0a6" opacity="0.77"/><circle cx="56.2" cy="30.3" r="0.47" fill="#b0b0a6" opacity="0.67"/><circle cx="45.0" cy="16.0" r="0.61" fill="#b0b0a6" opacity="0.70"/><circle cx="40.3" cy="2.6" r="0.67" fill="#b0b0a6" opacity="0.50"/><circle cx="26.5" cy="29.8" r="0.62" fill="#b0b0a6" opacity="0.56"/><circle cx="39.4" cy="31.9" r="0.60" fill="#b0b0a6" opacity="0.63"/><circle cx="23.5" cy="7.4" r="0.52" fill="#b0b0a6" opacity="0.38"/><circle cx="33.3" cy="18.8" r="0.51" fill="#b0b0a6" opacity="0.72"/><circle cx="28.8" cy="16.1" r="0.43" fill="#b0b0a6" opacity="0.76"/><circle cx="44.9" cy="7.1" r="0.66" fill="#b0b0a6" opacity="0.70"/><circle cx="33.0" cy="36.8" r="0.38" fill="#b0b0a6" opacity="0.52"/><circle cx="44.0" cy="18.6" r="0.55" fill="#b0b0a6" opacity="0.36"/><circle cx="66.9" cy="29.5" r="0.43" fill="#b0b0a6" opacity="0.33"/><circle cx="61.9" cy="38.4" r="0.55" fill="#b0b0a6" opacity="0.31"/><circle cx="50.9" cy="41.5" r="0.50" fill="#b0b0a6" opacity="0.73"/><circle cx="22.3" cy="21.6" r="0.41" fill="#b0b0a6" opacity="0.34"/><circle cx="37.0" cy="14.4" r="0.36" fill="#b0b0a6" opacity="0.83"/><circle cx="65.3" cy="52.2" r="0.38" fill="#b0b0a6" opacity="0.56"/><circle cx="57.2" cy="50.7" r="0.57" fill="#b0b0a6" opacity="0.65"/><circle cx="29.5" cy="42.2" r="0.51" fill="#b0b0a6" opacity="0.36"/><circle cx="40.5" cy="1.5" r="0.64" fill="#b0b0a6" opacity="0.41"/><circle cx="12.2" cy="20.9" r="0.60" fill="#b0b0a6" opacity="0.34"/><circle cx="30.5" cy="39.1" r="0.38" fill="#b0b0a6" opacity="0.60"/><circle cx="25.7" cy="5.6" r="0.58" fill="#b0b0a6" opacity="0.63"/><circle cx="47.4" cy="35.9" r="0.70" fill="#b0b0a6" opacity="0.48"/><circle cx="29.8" cy="26.0" r="0.43" fill="#b0b0a6" opacity="0.39"/><circle cx="59.8" cy="6.8" r="0.66" fill="#b0b0a6" opacity="0.84"/><circle cx="13.8" cy="21.3" r="0.68" fill="#b0b0a6" opacity="0.80"/><circle cx="55.0" cy="13.0" r="0.62" fill="#b0b0a6" opacity="0.52"/><circle cx="80.7" cy="14.6" r="0.45" fill="#b0b0a6" opacity="0.81"/><circle cx="42.9" cy="28.0" r="0.60" fill="#b0b0a6" opacity="0.46"/><circle cx="6.3" cy="23.5" r="0.36" fill="#b0b0a6" opacity="0.71"/><circle cx="40.9" cy="39.3" r="0.47" fill="#b0b0a6" opacity="0.71"/><circle cx="29.1" cy="8.9" r="0.39" fill="#b0b0a6" opacity="0.46"/><circle cx="30.9" cy="26.4" r="0.40" fill="#b0b0a6" opacity="0.72"/><circle cx="74.5" cy="11.7" r="0.48" fill="#b0b0a6" opacity="0.39"/><circle cx="35.8" cy="39.8" r="0.53" fill="#b0b0a6" opacity="0.60"/><circle cx="23.2" cy="49.9" r="0.45" fill="#b0b0a6" opacity="0.55"/><circle cx="37.3" cy="34.1" r="0.63" fill="#b0b0a6" opacity="0.31"/><circle cx="59.9" cy="34.0" r="0.54" fill="#b0b0a6" opacity="0.39"/><circle cx="50.5" cy="23.4" r="0.62" fill="#b0b0a6" opacity="0.56"/><circle cx="69.0" cy="13.1" r="0.69" fill="#b0b0a6" opacity="0.32"/><circle cx="38.5" cy="24.2" r="0.50" fill="#b0b0a6" opacity="0.49"/><circle cx="63.0" cy="24.8" r="0.38" fill="#b0b0a6" opacity="0.47"/><circle cx="51.0" cy="50.7" r="0.50" fill="#b0b0a6" opacity="0.44"/><circle cx="58.7" cy="23.6" r="0.57" fill="#b0b0a6" opacity="0.67"/></svg></div>
<div class="cap" style="left:960.4px;top:354.0px">Symbolics-2.jpg<br><i>602,3  kB</i></div>
<div class="th" style="left:1092.7px;top:269.6px;width:100.4px;height:79.4px"><svg width="96" height="76" viewBox="0 0 96 76" preserveAspectRatio="none"><defs><filter id="wdf" x="0" y="0" width="100%" height="100%"><feGaussianBlur stdDeviation="0.45 1.2"/></filter></defs><g filter="url(#wdf)"><rect x="0" y="0" width="96" height="76" fill="#2e180a"/><rect x="0" y="0" width="5.2" height="76" fill="#2a1608"/><rect x="5" y="0" width="7.2" height="76" fill="#4a2c14"/><rect x="12" y="0" width="8.2" height="76" fill="#2a1608"/><rect x="20" y="0" width="5.2" height="76" fill="#60401e"/><rect x="25" y="0" width="6.2" height="76" fill="#1c0c04"/><rect x="31" y="0" width="7.2" height="76" fill="#5a3818"/><rect x="38" y="0" width="3.2" height="76" fill="#2c160a"/><rect x="41" y="0" width="5.2" height="76" fill="#3e220e"/><rect x="46" y="0" width="3.2" height="76" fill="#241206"/><rect x="49" y="0" width="7.2" height="76" fill="#46280f"/><rect x="56" y="0" width="6.2" height="76" fill="#2e180a"/><rect x="62" y="0" width="8.2" height="76" fill="#48280f"/><rect x="70" y="0" width="6.2" height="76" fill="#321a0a"/><rect x="76" y="0" width="6.2" height="76" fill="#4a2a12"/><rect x="82" y="0" width="6.2" height="76" fill="#2c160a"/><rect x="88" y="0" width="8.2" height="76" fill="#3e200e"/><rect x="59.8" y="37.1" width="1.2" height="38.3" fill="#6a4420" opacity="0.54"/><rect x="74.5" y="12.5" width="0.5" height="14.7" fill="#502e14" opacity="0.41"/><rect x="23.7" y="27.2" width="1.0" height="10.4" fill="#1a0a02" opacity="0.39"/><rect x="17.5" y="43.4" width="0.9" height="32.9" fill="#6a4420" opacity="0.3"/><rect x="59.3" y="6.3" width="0.5" height="36.1" fill="#1a0a02" opacity="0.52"/><rect x="92.2" y="8.3" width="0.6" height="19.4" fill="#1a0a02" opacity="0.44"/><rect x="65.1" y="10.2" width="1.3" height="30.7" fill="#221006" opacity="0.35"/><rect x="34.7" y="8.3" width="0.6" height="12.0" fill="#502e14" opacity="0.54"/><rect x="56.3" y="29.8" width="1.1" height="12.0" fill="#502e14" opacity="0.54"/><rect x="46.2" y="15.8" width="0.9" height="31.1" fill="#6a4420" opacity="0.34"/><rect x="90.1" y="47.5" width="0.8" height="22.1" fill="#221006" opacity="0.38"/><rect x="55.5" y="0.5" width="0.5" height="15.4" fill="#1a0a02" opacity="0.29"/><rect x="23.6" y="41.0" width="0.9" height="25.4" fill="#502e14" opacity="0.52"/><rect x="10.4" y="37.4" width="1.2" height="35.8" fill="#6a4420" opacity="0.4"/><rect x="93.9" y="10.4" width="1.0" height="20.9" fill="#1a0a02" opacity="0.37"/><rect x="88.7" y="27.3" width="0.8" height="19.5" fill="#1a0a02" opacity="0.53"/><rect x="60.2" y="36.1" width="0.8" height="24.5" fill="#6a4420" opacity="0.28"/><rect x="57.7" y="46.2" width="0.5" height="32.2" fill="#502e14" opacity="0.54"/><rect x="43.7" y="21.1" width="0.6" height="37.5" fill="#6a4420" opacity="0.53"/><rect x="32.1" y="10.4" width="1.4" height="26.9" fill="#1a0a02" opacity="0.47"/><rect x="75.6" y="5.3" width="0.9" height="14.5" fill="#221006" opacity="0.35"/><rect x="43.5" y="50.0" width="1.3" height="39.3" fill="#221006" opacity="0.59"/><rect x="66.1" y="15.9" width="0.7" height="24.1" fill="#1a0a02" opacity="0.29"/><rect x="78.9" y="26.6" width="0.7" height="38.1" fill="#502e14" opacity="0.31"/><rect x="47.2" y="25.8" width="1.0" height="25.1" fill="#6a4420" opacity="0.53"/><rect x="74.4" y="34.7" width="1.1" height="32.8" fill="#502e14" opacity="0.45"/><rect x="64.2" y="41.8" width="0.7" height="39.4" fill="#502e14" opacity="0.58"/><rect x="32.6" y="8.9" width="1.3" height="24.2" fill="#502e14" opacity="0.36"/><rect x="26.3" y="14.4" width="1.0" height="30.2" fill="#502e14" opacity="0.37"/><rect x="61.8" y="36.9" width="1.2" height="20.5" fill="#1a0a02" opacity="0.55"/><rect x="66.1" y="48.8" width="1.4" height="25.5" fill="#1a0a02" opacity="0.32"/><rect x="34.8" y="42.7" width="0.8" height="12.4" fill="#221006" opacity="0.31"/><rect x="74.9" y="29.0" width="1.1" height="22.6" fill="#502e14" opacity="0.5"/><rect x="2.7" y="8.0" width="0.9" height="29.5" fill="#1a0a02" opacity="0.52"/><rect x="17.3" y="35.9" width="1.4" height="39.4" fill="#1a0a02" opacity="0.27"/><rect x="12.8" y="15.9" width="0.7" height="15.8" fill="#6a4420" opacity="0.4"/><rect x="33.7" y="33.1" width="0.6" height="16.1" fill="#502e14" opacity="0.25"/><rect x="38.9" y="13.9" width="0.9" height="13.5" fill="#502e14" opacity="0.59"/><rect x="52.8" y="15.1" width="0.8" height="25.4" fill="#502e14" opacity="0.59"/><rect x="78.6" y="21.0" width="1.2" height="29.3" fill="#502e14" opacity="0.41"/><rect x="25.5" y="0" width="0.6" height="76" fill="#0c0400" opacity="0.8"/><rect x="37.6" y="0" width="0.5" height="76" fill="#0c0400" opacity="0.7"/><rect x="82" y="0" width="0.5" height="76" fill="#0c0400" opacity="0.6"/><rect x="0" y="0" width="96" height="76" fill="#361c0c" opacity="0.38"/></g></svg></div>
<div class="cap" style="left:1092.7px;top:354.0px">Wood.jpg<br><i>7,0  MB</i></div>
<div class="th" style="left:298.8px;top:445.3px;width:100.4px;height:57.5px"><svg width="96" height="54" viewBox="0 0 96 54" preserveAspectRatio="none"><defs><linearGradient id="dyb" x1="0" y1="0" x2="1" y2="0.3"><stop offset="0" stop-color="#0e3ea4"/><stop offset="0.45" stop-color="#2848b8"/><stop offset="1" stop-color="#2840a0"/></linearGradient><radialGradient id="dy1" cx="0.62" cy="0.75" r="0.3"><stop offset="0" stop-color="#8478f0"/><stop offset="1" stop-color="#8478f0" stop-opacity="0"/></radialGradient><radialGradient id="dy2" cx="0.82" cy="0.55" r="0.22"><stop offset="0" stop-color="#e070c4"/><stop offset="1" stop-color="#e070c4" stop-opacity="0"/></radialGradient><radialGradient id="dy3" cx="0.72" cy="0.2" r="0.3"><stop offset="0" stop-color="#c8a0f0"/><stop offset="1" stop-color="#a090e0" stop-opacity="0"/></radialGradient><filter id="dyf"><feGaussianBlur stdDeviation="0.8"/></filter><filter id="dyf2"><feGaussianBlur stdDeviation="2.5"/></filter></defs><rect x="0" y="0" width="96" height="54" fill="url(#dyb)"/><g filter="url(#dyf2)"><polygon points="40,20 60,36 96,18 96,34 62,54 30,34" fill="#6468d8" opacity="0.7"/><polygon points="0,30 30,44 40,54 0,54" fill="#0c3698" opacity="0.8"/><polygon points="70,54 96,38 96,54" fill="#103a98" opacity="0.9"/></g><rect x="0" y="0" width="96" height="54" fill="url(#dy1)"/><rect x="0" y="0" width="96" height="54" fill="url(#dy2)"/><rect x="0" y="0" width="96" height="54" fill="url(#dy3)"/><g filter="url(#dyf)"><polygon points="60,21 72,16 84,22 60,35.5" fill="#484890" opacity="0.85"/><polygon points="64,10 70,7 76,10 76,18 70,21 64,18" fill="#d0a8f0" opacity="0.75"/><polygon points="68,13 72,11 76,13 72,15.5" fill="#8070b0" opacity="0.8"/><polygon points="80,10 86,7 92,10 86,14" fill="#5058a0" opacity="0.7"/><polygon points="24,38 34,43 34,47 24,42" fill="#0c3088" opacity="0.7"/><polygon points="28,8 40,3 46,6 40,12" fill="#203c98" opacity="0.6"/></g><path d="M0 14L22 2L50 16M22 2V16" fill="none" stroke="#3058c8" stroke-width="0.8" opacity="0.6"/></svg></div>
<div class="cap" style="left:298.8px;top:507.8px">adwaita-day.jpg<br><i>2,1  MB</i></div>
<div class="th" style="left:431.0px;top:445.3px;width:100.4px;height:57.5px"><svg width="96" height="54" viewBox="0 0 96 54" preserveAspectRatio="none"><defs><linearGradient id="mnb" x1="0" y1="0" x2="1" y2="0.6"><stop offset="0" stop-color="#2c48b8"/><stop offset="0.5" stop-color="#4a58e0"/><stop offset="1" stop-color="#183488"/></linearGradient><radialGradient id="mn1" cx="0.68" cy="0.05" r="0.5"><stop offset="0" stop-color="#d868f4"/><stop offset="0.5" stop-color="#a860f0" stop-opacity="0.7"/><stop offset="1" stop-color="#8060f0" stop-opacity="0"/></radialGradient><radialGradient id="mn2" cx="0.5" cy="1" r="0.3"><stop offset="0" stop-color="#3468ff"/><stop offset="1" stop-color="#3468ff" stop-opacity="0"/></radialGradient><radialGradient id="mn3" cx="0.3" cy="0.5" r="0.25"><stop offset="0" stop-color="#6070f0"/><stop offset="1" stop-color="#6070f0" stop-opacity="0"/></radialGradient><filter id="mnf"><feGaussianBlur stdDeviation="0.8"/></filter></defs><rect x="0" y="0" width="96" height="54" fill="url(#mnb)"/><rect x="0" y="0" width="96" height="54" fill="url(#mn1)"/><rect x="0" y="0" width="96" height="54" fill="url(#mn2)"/><rect x="0" y="0" width="96" height="54" fill="url(#mn3)"/><g filter="url(#mnf)"><polygon points="60,21 72,16 84,22 60,35.5" fill="#4a3c98" opacity="0.7"/><polygon points="64,10 70,7 76,10 76,18 70,21 64,18" fill="#d070f4" opacity="0.6"/><polygon points="68,13 72,11 76,13 72,15.5" fill="#6040a0" opacity="0.7"/><polygon points="80,10 86,7 92,10 86,14" fill="#6440a8" opacity="0.7"/><polygon points="32,4 40,1 46,4 40,9" fill="#5048a8" opacity="0.7"/><polygon points="14,34 22,30 30,36 24,42 14,40" fill="#2038a0" opacity="0.7"/><polygon points="30,44 36,41 40,46 32,50" fill="#2038a0" opacity="0.7"/><polygon points="60,36 84,24 96,18 96,40 70,54 60,54" fill="#1c3890" opacity="0.45"/></g><path d="M9 22L22 15L36 22V36L22 44L9 36ZM22 2V15M0 14L22 2L44 14M24 44L36 38L48 44V54M24 44V54" fill="none" stroke="#6c84f0" stroke-width="1" opacity="0.6"/></svg></div>
<div class="cap" style="left:431.0px;top:507.8px">adwaita-<br>morning.jpg<br><i>2,1  MB</i></div>
<div class="th" style="left:563.2px;top:445.3px;width:100.4px;height:57.5px"><svg width="96" height="54" viewBox="0 0 96 54" preserveAspectRatio="none"><defs><linearGradient id="ntb" x1="0" y1="0" x2="1" y2="0"><stop offset="0" stop-color="#120a1a"/><stop offset="0.5" stop-color="#2a1424"/><stop offset="1" stop-color="#24101a"/></linearGradient><radialGradient id="nt1" cx="0.95" cy="0" r="0.5"><stop offset="0" stop-color="#a04868"/><stop offset="0.5" stop-color="#6a3454" stop-opacity="0.8"/><stop offset="1" stop-color="#3a1c30" stop-opacity="0"/></radialGradient><linearGradient id="nt2" x1="0" y1="0" x2="0" y2="1"><stop offset="0.6" stop-color="#100810" stop-opacity="0"/><stop offset="1" stop-color="#0c060c" stop-opacity="0.7"/></linearGradient><filter id="ntf"><feGaussianBlur stdDeviation="0.8"/></filter></defs><rect x="0" y="0" width="96" height="54" fill="url(#ntb)"/><rect x="0" y="0" width="96" height="54" fill="url(#nt1)"/><rect x="0" y="0" width="96" height="54" fill="url(#nt2)"/><g filter="url(#ntf)"><polygon points="60,21 72,26 84,22 60,35.5" fill="#1a0e12" opacity="0.9"/><polygon points="64,10 70,7 76,10 76,18 70,21 64,18" fill="#8a5074" opacity="0.5"/><polygon points="68,13 72,11 76,13 72,15.5" fill="#2a1420" opacity="0.8"/><polygon points="80,10 86,7 92,10 86,14" fill="#2c1620" opacity="0.8"/><polygon points="30,2 40,0 48,4 40,9" fill="#160c12" opacity="0.7"/><rect x="23.5" y="44" width="4" height="10" fill="#261c64" opacity="0.8"/><polygon points="30,44 36,41 40,46 32,50" fill="#0e0814" opacity="0.7"/></g><path d="M9 22L22 15L36 22V36L22 44L9 36Z" fill="none" stroke="#2c2040" stroke-width="1" opacity="0.7"/></svg></div>
<div class="cap" style="left:563.2px;top:507.8px">adwaita-night.jpg<br><i>2,0  MB</i></div>
<div id="filt"><div style="position:absolute;left:2.5px;top:8px;line-height:17px">Show:</div><div class="combo" style="left:43.3px;top:3px;width:161.7px;height:24px"><span style="position:absolute;left:7.9px;top:4px;line-height:17px">All</span><svg viewBox="0 0 8 5" width="8" height="5" style="position:absolute;left:146.2px;top:10.6px"><path d="M0 0.2H8L4 4.4Z" fill="#eeeeec"/></svg></div><svg viewBox="0 0 10 14" width="10" height="14" style="position:absolute;left:850.9px;top:9.4px"><path d="M1.1 1.8Q1.1 1.2 1.7 1.4L8.9 4.7Q9.4 5 8.9 5.3L3.6 7.9V12.3Q3.6 13 2.4 13T1.1 12.3Z" fill="#467e14" stroke="rgba(130,130,130,0.4)" stroke-width="0.6"/></svg><svg viewBox="0 0 10 14" width="10" height="14" style="position:absolute;left:878px;top:9.4px"><path d="M1.1 1.8Q1.1 1.2 1.7 1.4L8.9 4.7Q9.4 5 8.9 5.3L3.6 7.9V12.3Q3.6 13 2.4 13T1.1 12.3Z" fill="#7e181c" stroke="rgba(130,130,130,0.4)" stroke-width="0.6"/></svg><svg viewBox="0 0 10 14" width="10" height="14" style="position:absolute;left:904.9px;top:9.4px"><path d="M1.1 1.8Q1.1 1.2 1.7 1.4L8.9 4.7Q9.4 5 8.9 5.3L3.6 7.9V12.3Q3.6 13 2.4 13T1.1 12.3Z" fill="#254078" stroke="rgba(130,130,130,0.4)" stroke-width="0.6"/></svg></div>
<div id="stat"><div style="position:absolute;left:5px;top:7px;line-height:17px;white-space:pre">17 files (35,4  MB)  ·  30,9  GB of free space</div><div class="combo" style="left:1178px;top:2px;width:25px;height:24px"><svg viewBox="0 0 16 16" width="16" height="16" style="position:absolute;left:4.2px;top:4px"><path d="M8 2.1A4 4 0 0 1 10.5 9.3Q9.9 9.9 9.9 11H6.1Q6.1 9.9 5.5 9.3A4 4 0 0 1 8 2.1Z" fill="none" stroke="#eeeeec" stroke-width="1.5"/><rect x="6.2" y="12.6" width="3.7" height="1.3" fill="#eeeeec"/></svg></div></div>
</div>
</body></html>
